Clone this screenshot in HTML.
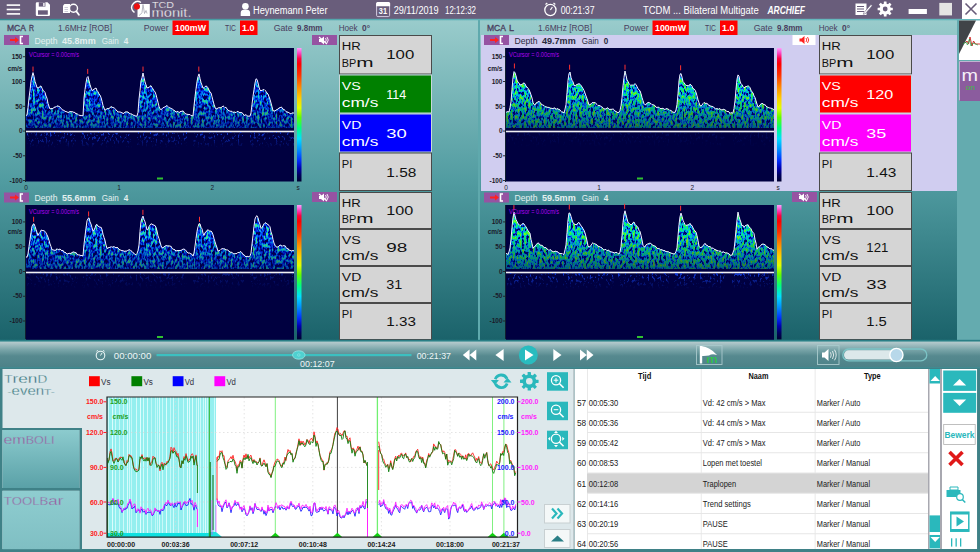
<!DOCTYPE html>
<html><head><meta charset="utf-8"><title>TCD monit</title>
<style>html,body{margin:0;padding:0;width:980px;height:552px;overflow:hidden;background:#5fa7ab;font-family:"Liberation Sans",sans-serif}svg{display:block}</style>
</head><body><svg width="980" height="552" viewBox="0 0 980 552" font-family="Liberation Sans, sans-serif"><defs><linearGradient id="gPanel" x1="0" y1="0" x2="0" y2="1">
<stop offset="0" stop-color="#9acccc"/><stop offset="0.5" stop-color="#519ca1"/><stop offset="1" stop-color="#1a626a"/></linearGradient>
<linearGradient id="gTopLine" x1="0" y1="0" x2="1" y2="0"><stop offset="0" stop-color="#358b93"/><stop offset="0.6" stop-color="#6abcc1"/><stop offset="1" stop-color="#62b6bb"/></linearGradient>
<linearGradient id="gPlay" x1="0" y1="0" x2="0" y2="1">
<stop offset="0" stop-color="#b8cccf"/><stop offset="0.3" stop-color="#7ba6aa"/><stop offset="0.55" stop-color="#56898f"/><stop offset="1" stop-color="#4c8288"/></linearGradient>
<linearGradient id="gEmb" x1="0" y1="0" x2="0" y2="1">
<stop offset="0" stop-color="#8ccbce"/><stop offset="1" stop-color="#5aa1a7"/></linearGradient>
<linearGradient id="gTool" x1="0" y1="0" x2="0" y2="1">
<stop offset="0" stop-color="#8fcdd0"/><stop offset="1" stop-color="#7fbfc3"/></linearGradient>
<linearGradient id="gBar" x1="0" y1="0" x2="0" y2="1">
<stop offset="0" stop-color="#ffa0ff"/><stop offset="0.04" stop-color="#ff40c0"/><stop offset="0.08" stop-color="#ff0040"/><stop offset="0.12" stop-color="#ff0000"/>
<stop offset="0.2" stop-color="#ff3000"/><stop offset="0.3" stop-color="#ff9000"/><stop offset="0.38" stop-color="#ffd000"/><stop offset="0.45" stop-color="#e0ff00"/>
<stop offset="0.52" stop-color="#60ff00"/><stop offset="0.6" stop-color="#00ff80"/><stop offset="0.68" stop-color="#00e0ff"/><stop offset="0.76" stop-color="#0090ff"/>
<stop offset="0.84" stop-color="#0030ff"/><stop offset="0.9" stop-color="#0000b0"/><stop offset="0.95" stop-color="#000060"/><stop offset="1" stop-color="#000030"/></linearGradient>
<filter id="spk" x="0" y="0" width="1" height="1" filterUnits="objectBoundingBox" color-interpolation-filters="sRGB">
<feTurbulence type="fractalNoise" baseFrequency="0.45 0.25" numOctaves="2" seed="4" result="n"/>
<feColorMatrix in="n" type="matrix" values="1 0 0 0 0  1 0 0 0 0  1 0 0 0 0  0 0 0 0 1" result="g"/>
<feComponentTransfer in="g" result="s"><feFuncR type="linear" slope="2.5" intercept="-0.85"/><feFuncG type="linear" slope="2.5" intercept="-0.85"/><feFuncB type="linear" slope="2.5" intercept="-0.85"/></feComponentTransfer>
<feComponentTransfer in="s"><feFuncR type="table" tableValues="0 0 0 0 0 0.1 0.3"/><feFuncG type="table" tableValues="0 0.02 0.15 0.42 0.72 0.9 1"/><feFuncB type="table" tableValues="0.3 0.65 0.95 1 1 0.8 0.5"/></feComponentTransfer>
</filter>
<filter id="spk2" x="0" y="0" width="1" height="1" filterUnits="objectBoundingBox" color-interpolation-filters="sRGB">
<feTurbulence type="fractalNoise" baseFrequency="0.45 0.25" numOctaves="2" seed="9" result="n"/>
<feColorMatrix in="n" type="matrix" values="1 0 0 0 0  1 0 0 0 0  1 0 0 0 0  0 0 0 0 1" result="g"/>
<feComponentTransfer in="g" result="s"><feFuncR type="linear" slope="2.5" intercept="-0.8"/><feFuncG type="linear" slope="2.5" intercept="-0.8"/><feFuncB type="linear" slope="2.5" intercept="-0.8"/></feComponentTransfer>
<feComponentTransfer in="s"><feFuncR type="table" tableValues="0 0 0 0 0 0.15 0.5"/><feFuncG type="table" tableValues="0.03 0.22 0.55 0.85 1 1 1"/><feFuncB type="table" tableValues="0.4 0.9 1 0.85 0.5 0.25 0.1"/></feComponentTransfer>
</filter>
<filter id="sprs" x="0" y="0" width="1" height="1" filterUnits="objectBoundingBox" color-interpolation-filters="sRGB">
<feTurbulence type="fractalNoise" baseFrequency="0.5 0.3" numOctaves="2" seed="5" result="n"/>
<feColorMatrix in="n" type="matrix" values="0 0 0 0 0.1  0 0 0 0 0.3  0 0 0 0 1  7 0 0 0 -3.9"/>
</filter>
<linearGradient id="gFade" x1="0" y1="0" x2="0" y2="1"><stop offset="0" stop-color="#fff" stop-opacity="1"/><stop offset="1" stop-color="#fff" stop-opacity="0"/></linearGradient>
<linearGradient id="gDark" x1="0" y1="0" x2="0" y2="1"><stop offset="0" stop-color="#000040" stop-opacity="0"/><stop offset="0.55" stop-color="#000040" stop-opacity="0.1"/><stop offset="1" stop-color="#000040" stop-opacity="0.55"/></linearGradient>
<linearGradient id="gDark2" x1="0" y1="0" x2="0" y2="1"><stop offset="0" stop-color="#000040" stop-opacity="0"/><stop offset="0.5" stop-color="#000040" stop-opacity="0.05"/><stop offset="1" stop-color="#000040" stop-opacity="0.6"/></linearGradient>
<clipPath id="cp1"><path d="M26,128 L26.0,115.4 L27.0,115.1 L28.0,107.5 L29.0,98.1 L30.0,90.2 L31.0,81.3 L32.0,76.3 L33.0,72.6 L34.0,76.3 L35.0,81.4 L36.0,84.2 L37.0,87.7 L38.0,87.8 L39.0,87.9 L40.0,86.3 L41.0,86.0 L42.0,88.2 L43.0,90.2 L44.0,91.2 L45.0,92.4 L46.0,96.0 L47.0,98.3 L48.0,103.4 L49.0,106.3 L50.0,109.0 L51.0,108.5 L52.0,108.4 L53.0,108.7 L54.0,107.2 L55.0,107.2 L56.0,106.8 L57.0,105.8 L58.0,106.2 L59.0,106.3 L60.0,107.1 L61.0,108.1 L62.0,109.7 L63.0,110.1 L64.0,110.4 L65.0,111.3 L66.0,111.6 L67.0,111.9 L68.0,112.5 L69.0,112.2 L70.0,111.4 L71.0,111.8 L72.0,111.6 L73.0,112.0 L74.0,112.4 L75.0,112.4 L76.0,114.1 L77.0,113.4 L78.0,114.5 L79.0,115.5 L80.0,115.0 L81.0,115.9 L82.0,115.4 L83.0,115.9 L84.0,98.0 L85.0,89.4 L86.0,82.8 L87.0,77.6 L88.0,76.5 L89.0,80.6 L90.0,84.6 L91.0,87.7 L92.0,90.5 L93.0,90.2 L94.0,89.0 L95.0,88.8 L96.0,87.9 L97.0,90.5 L98.0,91.8 L99.0,93.9 L100.0,95.1 L101.0,97.4 L102.0,101.2 L103.0,105.4 L104.0,108.0 L105.0,110.3 L106.0,109.4 L107.0,108.8 L108.0,108.3 L109.0,108.9 L110.0,107.3 L111.0,107.0 L112.0,106.7 L113.0,108.0 L114.0,107.5 L115.0,108.8 L116.0,109.8 L117.0,111.1 L118.0,111.7 L119.0,112.2 L120.0,111.8 L121.0,112.5 L122.0,112.7 L123.0,113.4 L124.0,113.4 L125.0,112.0 L126.0,111.9 L127.0,111.9 L128.0,112.0 L129.0,113.0 L130.0,113.8 L131.0,113.9 L132.0,114.1 L133.0,115.2 L134.0,115.2 L135.0,115.6 L136.0,116.3 L137.0,116.0 L138.0,112.3 L139.0,99.0 L140.0,90.4 L141.0,80.8 L142.0,77.7 L143.0,73.0 L144.0,77.6 L145.0,81.9 L146.0,84.8 L147.0,88.2 L148.0,87.3 L149.0,87.6 L150.0,86.2 L151.0,85.7 L152.0,87.5 L153.0,89.0 L154.0,90.8 L155.0,91.9 L156.0,94.5 L157.0,98.5 L158.0,102.2 L159.0,106.4 L160.0,108.9 L161.0,109.7 L162.0,108.9 L163.0,107.7 L164.0,107.3 L165.0,106.9 L166.0,106.3 L167.0,105.4 L168.0,106.7 L169.0,107.7 L170.0,107.7 L171.0,108.6 L172.0,108.7 L173.0,109.6 L174.0,110.4 L175.0,110.8 L176.0,112.2 L177.0,111.6 L178.0,111.3 L179.0,112.7 L180.0,111.9 L181.0,111.1 L182.0,111.6 L183.0,110.7 L184.0,112.1 L185.0,113.5 L186.0,113.9 L187.0,114.3 L188.0,114.3 L189.0,114.6 L190.0,114.5 L191.0,115.7 L192.0,115.5 L193.0,116.1 L194.0,106.0 L195.0,96.6 L196.0,88.9 L197.0,81.4 L198.0,76.7 L199.0,73.9 L200.0,78.4 L201.0,82.5 L202.0,85.2 L203.0,88.3 L204.0,87.6 L205.0,86.6 L206.0,86.1 L207.0,86.4 L208.0,87.9 L209.0,90.1 L210.0,92.1 L211.0,92.8 L212.0,96.7 L213.0,100.6 L214.0,104.3 L215.0,107.2 L216.0,109.1 L217.0,108.6 L218.0,108.1 L219.0,107.6 L220.0,107.8 L221.0,107.6 L222.0,107.0 L223.0,105.9 L224.0,106.6 L225.0,107.6 L226.0,107.3 L227.0,109.0 L228.0,110.2 L229.0,110.7 L230.0,111.2 L231.0,111.3 L232.0,111.3 L233.0,112.6 L234.0,111.8 L235.0,112.4 L236.0,112.5 L237.0,111.5 L238.0,111.4 L239.0,112.3 L240.0,112.6 L241.0,112.3 L242.0,112.9 L243.0,113.6 L244.0,115.3 L245.0,115.4 L246.0,114.5 L247.0,115.8 L248.0,116.3 L249.0,116.0 L250.0,116.2 L251.0,112.9 L252.0,104.4 L253.0,96.3 L254.0,89.7 L255.0,83.1 L256.0,78.8 L257.0,79.4 L258.0,82.8 L259.0,87.1 L260.0,90.3 L261.0,90.7 L262.0,90.3 L263.0,89.9 L264.0,89.4 L265.0,90.4 L266.0,91.3 L267.0,93.0 L268.0,94.0 L269.0,96.6 L270.0,99.3 L271.0,103.0 L272.0,106.7 L273.0,110.8 L274.0,110.8 L275.0,111.1 L276.0,110.0 L277.0,109.6 L278.0,109.1 L279.0,107.8 L280.0,107.9 L281.0,107.0 L282.0,107.5 L283.0,109.5 L284.0,109.2 L285.0,110.5 L286.0,111.6 L287.0,112.0 L288.0,112.1 L289.0,112.8 L290.0,113.4 L291.0,113.9 L292.0,112.7 L293.0,113.3 L294.0,112.7 L294,128 Z"/></clipPath>
<mask id="mk1" maskUnits="userSpaceOnUse" x="26" y="131" width="268" height="30"><rect x="26" y="132" width="268" height="16" fill="url(#gFade)"/></mask>
<clipPath id="cp2"><path d="M26,269.0 L26.0,256.6 L27.0,257.4 L28.0,253.9 L29.0,246.4 L30.0,239.4 L31.0,232.4 L32.0,226.3 L33.0,224.3 L34.0,223.8 L35.0,226.3 L36.0,229.5 L37.0,232.4 L38.0,235.4 L39.0,233.5 L40.0,232.4 L41.0,230.2 L42.0,230.2 L43.0,230.9 L44.0,230.4 L45.0,231.6 L46.0,232.8 L47.0,234.9 L48.0,237.1 L49.0,240.3 L50.0,243.9 L51.0,246.5 L52.0,249.9 L53.0,249.7 L54.0,250.3 L55.0,250.2 L56.0,250.2 L57.0,248.7 L58.0,249.7 L59.0,249.7 L60.0,248.9 L61.0,250.2 L62.0,250.7 L63.0,250.3 L64.0,252.3 L65.0,252.2 L66.0,252.9 L67.0,254.0 L68.0,253.9 L69.0,253.1 L70.0,253.5 L71.0,253.3 L72.0,252.6 L73.0,252.0 L74.0,251.9 L75.0,252.7 L76.0,252.5 L77.0,254.2 L78.0,255.0 L79.0,254.8 L80.0,255.2 L81.0,255.6 L82.0,255.4 L83.0,255.9 L84.0,244.3 L85.0,235.9 L86.0,228.1 L87.0,220.8 L88.0,218.6 L89.0,217.8 L90.0,221.8 L91.0,224.1 L92.0,227.6 L93.0,231.3 L94.0,230.0 L95.0,227.9 L96.0,224.9 L97.0,224.4 L98.0,226.3 L99.0,226.5 L100.0,227.4 L101.0,227.1 L102.0,229.5 L103.0,234.2 L104.0,237.4 L105.0,240.3 L106.0,245.1 L107.0,248.1 L108.0,248.5 L109.0,247.0 L110.0,247.9 L111.0,246.4 L112.0,247.4 L113.0,246.8 L114.0,246.7 L115.0,247.2 L116.0,247.9 L117.0,247.2 L118.0,247.9 L119.0,249.4 L120.0,249.8 L121.0,250.3 L122.0,250.6 L123.0,250.7 L124.0,251.2 L125.0,251.3 L126.0,250.9 L127.0,251.2 L128.0,250.1 L129.0,250.0 L130.0,249.7 L131.0,250.9 L132.0,251.4 L133.0,252.8 L134.0,253.2 L135.0,254.6 L136.0,254.6 L137.0,253.5 L138.0,250.6 L139.0,245.0 L140.0,231.4 L141.0,221.3 L142.0,218.1 L143.0,216.1 L144.0,219.5 L145.0,221.8 L146.0,225.8 L147.0,229.9 L148.0,229.5 L149.0,226.4 L150.0,225.1 L151.0,223.7 L152.0,224.3 L153.0,224.6 L154.0,225.3 L155.0,225.5 L156.0,227.3 L157.0,231.0 L158.0,235.8 L159.0,238.6 L160.0,242.0 L161.0,245.5 L162.0,247.9 L163.0,247.7 L164.0,247.0 L165.0,246.1 L166.0,245.7 L167.0,245.7 L168.0,246.1 L169.0,245.7 L170.0,246.3 L171.0,246.2 L172.0,248.3 L173.0,249.2 L174.0,249.4 L175.0,249.8 L176.0,251.2 L177.0,250.4 L178.0,250.7 L179.0,250.4 L180.0,250.6 L181.0,250.3 L182.0,249.9 L183.0,249.0 L184.0,249.2 L185.0,249.5 L186.0,250.9 L187.0,251.7 L188.0,253.2 L189.0,252.9 L190.0,253.2 L191.0,254.0 L192.0,254.3 L193.0,256.1 L194.0,253.1 L195.0,246.0 L196.0,238.5 L197.0,231.3 L198.0,226.8 L199.0,223.7 L200.0,223.8 L201.0,227.3 L202.0,228.9 L203.0,233.2 L204.0,235.4 L205.0,232.6 L206.0,232.1 L207.0,230.3 L208.0,229.8 L209.0,230.6 L210.0,231.4 L211.0,230.9 L212.0,232.2 L213.0,234.7 L214.0,238.5 L215.0,241.7 L216.0,244.9 L217.0,247.6 L218.0,251.2 L219.0,250.6 L220.0,250.3 L221.0,249.3 L222.0,248.7 L223.0,248.6 L224.0,249.1 L225.0,248.8 L226.0,250.1 L227.0,249.7 L228.0,250.3 L229.0,251.1 L230.0,252.0 L231.0,252.4 L232.0,252.2 L233.0,253.7 L234.0,253.8 L235.0,253.7 L236.0,253.6 L237.0,253.5 L238.0,252.2 L239.0,252.9 L240.0,251.7 L241.0,251.7 L242.0,252.9 L243.0,254.6 L244.0,254.7 L245.0,256.1 L246.0,256.8 L247.0,256.3 L248.0,256.5 L249.0,256.9 L250.0,255.9 L251.0,253.1 L252.0,244.0 L253.0,235.6 L254.0,226.2 L255.0,219.0 L256.0,216.5 L257.0,215.7 L258.0,217.9 L259.0,221.5 L260.0,224.5 L261.0,228.5 L262.0,227.3 L263.0,225.8 L264.0,223.8 L265.0,222.8 L266.0,222.9 L267.0,224.0 L268.0,224.6 L269.0,225.4 L270.0,226.8 L271.0,231.9 L272.0,234.6 L273.0,239.5 L274.0,243.1 L275.0,245.2 L276.0,246.8 L277.0,247.1 L278.0,247.0 L279.0,245.8 L280.0,245.2 L281.0,245.1 L282.0,246.4 L283.0,245.4 L284.0,246.1 L285.0,245.6 L286.0,247.2 L287.0,248.8 L288.0,248.4 L289.0,250.3 L290.0,250.1 L291.0,250.9 L292.0,250.9 L293.0,250.3 L294.0,250.9 L294,269.0 Z"/></clipPath>
<mask id="mk2" maskUnits="userSpaceOnUse" x="26" y="272.0" width="268" height="30"><rect x="26" y="273.0" width="268" height="16" fill="url(#gFade)"/></mask>
<clipPath id="cp3"><path d="M506,128 L506.0,112.5 L507.0,111.7 L508.0,111.7 L509.0,112.0 L510.0,107.5 L511.0,101.9 L512.0,89.2 L513.0,77.6 L514.0,71.6 L515.0,72.7 L516.0,75.9 L517.0,80.1 L518.0,82.2 L519.0,83.1 L520.0,85.1 L521.0,84.6 L522.0,84.7 L523.0,83.3 L524.0,83.0 L525.0,83.7 L526.0,86.2 L527.0,87.0 L528.0,88.2 L529.0,89.8 L530.0,92.0 L531.0,94.8 L532.0,98.0 L533.0,102.4 L534.0,104.6 L535.0,104.9 L536.0,103.1 L537.0,102.4 L538.0,102.0 L539.0,101.2 L540.0,102.3 L541.0,103.9 L542.0,104.6 L543.0,105.2 L544.0,105.5 L545.0,106.5 L546.0,107.0 L547.0,106.9 L548.0,107.7 L549.0,107.1 L550.0,108.3 L551.0,108.0 L552.0,108.6 L553.0,108.5 L554.0,108.1 L555.0,107.9 L556.0,109.5 L557.0,108.4 L558.0,109.1 L559.0,109.4 L560.0,109.9 L561.0,111.3 L562.0,112.3 L563.0,111.8 L564.0,113.0 L565.0,109.2 L566.0,104.6 L567.0,92.8 L568.0,80.2 L569.0,73.7 L570.0,72.0 L571.0,77.5 L572.0,80.3 L573.0,81.8 L574.0,84.9 L575.0,86.1 L576.0,85.1 L577.0,84.4 L578.0,84.2 L579.0,83.6 L580.0,84.3 L581.0,85.3 L582.0,87.0 L583.0,88.5 L584.0,90.5 L585.0,93.1 L586.0,96.0 L587.0,98.6 L588.0,101.7 L589.0,104.9 L590.0,104.7 L591.0,103.9 L592.0,102.8 L593.0,102.4 L594.0,102.9 L595.0,102.3 L596.0,103.6 L597.0,104.5 L598.0,105.6 L599.0,105.3 L600.0,105.8 L601.0,106.3 L602.0,107.1 L603.0,107.7 L604.0,108.9 L605.0,108.9 L606.0,109.1 L607.0,107.8 L608.0,108.0 L609.0,109.2 L610.0,109.6 L611.0,109.1 L612.0,109.5 L613.0,108.8 L614.0,109.7 L615.0,111.1 L616.0,111.5 L617.0,112.1 L618.0,112.8 L619.0,112.2 L620.0,110.4 L621.0,105.8 L622.0,97.9 L623.0,85.9 L624.0,77.3 L625.0,71.0 L626.0,75.3 L627.0,79.9 L628.0,81.4 L629.0,83.5 L630.0,84.7 L631.0,85.7 L632.0,84.6 L633.0,85.6 L634.0,84.6 L635.0,83.6 L636.0,84.8 L637.0,86.5 L638.0,88.6 L639.0,90.1 L640.0,90.7 L641.0,93.7 L642.0,97.5 L643.0,100.7 L644.0,103.5 L645.0,104.8 L646.0,104.6 L647.0,103.0 L648.0,102.7 L649.0,102.2 L650.0,103.3 L651.0,103.5 L652.0,104.7 L653.0,104.7 L654.0,105.1 L655.0,105.6 L656.0,107.3 L657.0,107.4 L658.0,107.2 L659.0,107.3 L660.0,108.3 L661.0,108.7 L662.0,108.4 L663.0,108.3 L664.0,109.1 L665.0,109.6 L666.0,108.7 L667.0,108.6 L668.0,109.2 L669.0,109.5 L670.0,110.5 L671.0,110.2 L672.0,111.7 L673.0,112.2 L674.0,112.3 L675.0,112.4 L676.0,109.9 L677.0,104.4 L678.0,93.9 L679.0,80.8 L680.0,74.3 L681.0,73.5 L682.0,77.1 L683.0,81.5 L684.0,82.7 L685.0,84.2 L686.0,85.4 L687.0,85.5 L688.0,85.7 L689.0,85.9 L690.0,84.1 L691.0,84.8 L692.0,86.0 L693.0,88.7 L694.0,88.8 L695.0,90.1 L696.0,92.2 L697.0,95.8 L698.0,99.7 L699.0,102.7 L700.0,105.5 L701.0,106.0 L702.0,105.1 L703.0,103.5 L704.0,102.5 L705.0,103.1 L706.0,103.6 L707.0,103.1 L708.0,104.9 L709.0,105.1 L710.0,105.8 L711.0,106.2 L712.0,106.4 L713.0,106.7 L714.0,107.6 L715.0,108.2 L716.0,109.3 L717.0,108.1 L718.0,109.6 L719.0,108.5 L720.0,108.9 L721.0,109.7 L722.0,109.9 L723.0,109.5 L724.0,109.1 L725.0,110.1 L726.0,110.4 L727.0,111.8 L728.0,111.2 L729.0,112.0 L730.0,113.4 L731.0,112.4 L732.0,113.3 L733.0,112.8 L734.0,108.5 L735.0,100.9 L736.0,89.1 L737.0,79.2 L738.0,74.9 L739.0,76.1 L740.0,81.1 L741.0,83.7 L742.0,84.7 L743.0,86.5 L744.0,87.8 L745.0,87.1 L746.0,86.4 L747.0,86.7 L748.0,85.6 L749.0,86.6 L750.0,87.6 L751.0,90.2 L752.0,91.9 L753.0,92.8 L754.0,96.0 L755.0,97.5 L756.0,100.8 L757.0,104.1 L758.0,107.1 L759.0,106.4 L760.0,104.8 L761.0,103.9 L762.0,103.5 L763.0,103.6 L764.0,105.0 L765.0,104.5 L766.0,106.2 L767.0,106.8 L768.0,107.4 L769.0,107.8 L770.0,108.1 L771.0,108.1 L772.0,108.6 L773.0,109.0 L774.0,109.8 L774,128 Z"/></clipPath>
<mask id="mk3" maskUnits="userSpaceOnUse" x="506" y="131" width="268" height="30"><rect x="506" y="132" width="268" height="16" fill="url(#gFade)"/></mask>
<clipPath id="cp4"><path d="M506,269.0 L506.0,253.5 L507.0,253.7 L508.0,254.6 L509.0,251.7 L510.0,247.9 L511.0,239.1 L512.0,227.5 L513.0,217.6 L514.0,212.2 L515.0,215.8 L516.0,219.6 L517.0,221.4 L518.0,223.8 L519.0,224.4 L520.0,225.4 L521.0,225.2 L522.0,224.2 L523.0,223.3 L524.0,224.0 L525.0,225.6 L526.0,226.9 L527.0,228.7 L528.0,230.6 L529.0,232.1 L530.0,233.3 L531.0,239.4 L532.0,243.4 L533.0,248.2 L534.0,246.9 L535.0,246.5 L536.0,244.7 L537.0,243.8 L538.0,242.9 L539.0,243.4 L540.0,245.1 L541.0,245.2 L542.0,245.4 L543.0,246.1 L544.0,247.7 L545.0,247.5 L546.0,247.6 L547.0,249.1 L548.0,249.4 L549.0,250.5 L550.0,249.4 L551.0,250.3 L552.0,251.2 L553.0,251.5 L554.0,252.0 L555.0,250.9 L556.0,251.6 L557.0,251.6 L558.0,252.0 L559.0,253.5 L560.0,253.1 L561.0,253.9 L562.0,253.3 L563.0,254.4 L564.0,254.2 L565.0,249.8 L566.0,244.9 L567.0,232.7 L568.0,219.8 L569.0,212.9 L570.0,213.3 L571.0,216.4 L572.0,219.9 L573.0,222.5 L574.0,223.9 L575.0,224.4 L576.0,224.7 L577.0,224.2 L578.0,223.0 L579.0,222.4 L580.0,224.1 L581.0,225.9 L582.0,226.7 L583.0,228.7 L584.0,230.2 L585.0,232.9 L586.0,236.6 L587.0,240.8 L588.0,245.8 L589.0,247.1 L590.0,246.4 L591.0,245.5 L592.0,243.6 L593.0,242.7 L594.0,243.7 L595.0,243.9 L596.0,244.3 L597.0,244.9 L598.0,246.5 L599.0,246.1 L600.0,247.1 L601.0,247.3 L602.0,248.0 L603.0,249.3 L604.0,250.1 L605.0,249.5 L606.0,249.5 L607.0,250.7 L608.0,250.2 L609.0,250.2 L610.0,251.9 L611.0,251.5 L612.0,252.4 L613.0,252.0 L614.0,253.1 L615.0,252.7 L616.0,252.4 L617.0,252.5 L618.0,253.6 L619.0,254.0 L620.0,252.1 L621.0,246.5 L622.0,235.6 L623.0,222.5 L624.0,214.5 L625.0,210.8 L626.0,214.8 L627.0,218.7 L628.0,222.4 L629.0,223.1 L630.0,224.2 L631.0,224.8 L632.0,224.4 L633.0,222.6 L634.0,222.0 L635.0,224.3 L636.0,225.6 L637.0,226.2 L638.0,227.3 L639.0,230.4 L640.0,231.4 L641.0,235.3 L642.0,239.9 L643.0,245.2 L644.0,246.8 L645.0,246.8 L646.0,244.9 L647.0,244.2 L648.0,243.9 L649.0,243.5 L650.0,243.0 L651.0,243.7 L652.0,244.6 L653.0,245.4 L654.0,245.8 L655.0,246.0 L656.0,246.7 L657.0,248.1 L658.0,249.0 L659.0,248.2 L660.0,249.5 L661.0,250.1 L662.0,249.3 L663.0,250.9 L664.0,250.0 L665.0,251.1 L666.0,251.4 L667.0,251.8 L668.0,251.6 L669.0,252.2 L670.0,252.8 L671.0,252.9 L672.0,253.6 L673.0,253.7 L674.0,254.0 L675.0,253.6 L676.0,251.4 L677.0,247.8 L678.0,236.0 L679.0,224.6 L680.0,216.6 L681.0,213.1 L682.0,216.3 L683.0,220.2 L684.0,222.5 L685.0,224.5 L686.0,225.5 L687.0,225.0 L688.0,225.0 L689.0,224.6 L690.0,223.3 L691.0,225.2 L692.0,225.5 L693.0,227.9 L694.0,229.7 L695.0,231.0 L696.0,232.0 L697.0,235.7 L698.0,240.4 L699.0,246.2 L700.0,247.5 L701.0,247.7 L702.0,246.9 L703.0,245.5 L704.0,244.7 L705.0,243.3 L706.0,245.2 L707.0,245.0 L708.0,246.3 L709.0,246.8 L710.0,246.2 L711.0,247.8 L712.0,248.6 L713.0,247.8 L714.0,248.8 L715.0,250.0 L716.0,249.5 L717.0,251.0 L718.0,250.3 L719.0,251.5 L720.0,250.7 L721.0,251.6 L722.0,252.6 L723.0,251.7 L724.0,252.1 L725.0,252.9 L726.0,252.9 L727.0,252.8 L728.0,253.4 L729.0,253.7 L730.0,255.3 L731.0,255.1 L732.0,255.2 L733.0,252.3 L734.0,249.9 L735.0,241.0 L736.0,229.6 L737.0,220.0 L738.0,212.1 L739.0,216.5 L740.0,219.7 L741.0,222.6 L742.0,226.0 L743.0,225.3 L744.0,227.2 L745.0,226.0 L746.0,225.1 L747.0,225.2 L748.0,224.6 L749.0,227.0 L750.0,227.5 L751.0,228.8 L752.0,231.2 L753.0,232.3 L754.0,233.6 L755.0,239.4 L756.0,243.1 L757.0,249.2 L758.0,247.3 L759.0,247.0 L760.0,246.6 L761.0,245.0 L762.0,244.1 L763.0,244.1 L764.0,244.2 L765.0,244.8 L766.0,245.6 L767.0,246.9 L768.0,247.2 L769.0,247.9 L770.0,249.1 L771.0,248.4 L772.0,249.2 L773.0,250.4 L774.0,249.7 L774,269.0 Z"/></clipPath>
<mask id="mk4" maskUnits="userSpaceOnUse" x="506" y="272.0" width="268" height="30"><rect x="506" y="273.0" width="268" height="16" fill="url(#gFade)"/></mask></defs>
<rect x="0" y="0" width="980" height="552" fill="#5fa7ab"/>
<rect x="0" y="19" width="957" height="322" fill="url(#gPanel)"/>
<rect x="478" y="19" width="2" height="322" fill="#5fa9ad"/>
<rect x="481" y="35" width="476" height="156" fill="#d0cdf0"/>
<rect x="957" y="19" width="23" height="322" fill="#64abaf"/>
<rect x="0" y="0" width="980" height="19" fill="#695d7b"/>
<rect x="0" y="18.8" width="980" height="1.5" fill="url(#gTopLine)"/>
<g>
<rect x="26" y="48" width="268" height="133.5" fill="#000040"/>
<rect x="26" y="48" width="268" height="133.5" filter="url(#spk)" clip-path="url(#cp1)"/>
<rect x="26" y="56" width="268" height="75" fill="url(#gDark)" clip-path="url(#cp1)"/>
<path d="M26.0,115.4 L27.0,115.1 L28.0,107.5 L29.0,98.1 L30.0,90.2 L31.0,81.3 L32.0,76.3 L33.0,72.6 L34.0,76.3 L35.0,81.4 L36.0,84.2 L37.0,87.7 L38.0,87.8 L39.0,87.9 L40.0,86.3 L41.0,86.0 L42.0,88.2 L43.0,90.2 L44.0,91.2 L45.0,92.4 L46.0,96.0 L47.0,98.3 L48.0,103.4 L49.0,106.3 L50.0,109.0 L51.0,108.5 L52.0,108.4 L53.0,108.7 L54.0,107.2 L55.0,107.2 L56.0,106.8 L57.0,105.8 L58.0,106.2 L59.0,106.3 L60.0,107.1 L61.0,108.1 L62.0,109.7 L63.0,110.1 L64.0,110.4 L65.0,111.3 L66.0,111.6 L67.0,111.9 L68.0,112.5 L69.0,112.2 L70.0,111.4 L71.0,111.8 L72.0,111.6 L73.0,112.0 L74.0,112.4 L75.0,112.4 L76.0,114.1 L77.0,113.4 L78.0,114.5 L79.0,115.5 L80.0,115.0 L81.0,115.9 L82.0,115.4 L83.0,115.9 L84.0,98.0 L85.0,89.4 L86.0,82.8 L87.0,77.6 L88.0,76.5 L89.0,80.6 L90.0,84.6 L91.0,87.7 L92.0,90.5 L93.0,90.2 L94.0,89.0 L95.0,88.8 L96.0,87.9 L97.0,90.5 L98.0,91.8 L99.0,93.9 L100.0,95.1 L101.0,97.4 L102.0,101.2 L103.0,105.4 L104.0,108.0 L105.0,110.3 L106.0,109.4 L107.0,108.8 L108.0,108.3 L109.0,108.9 L110.0,107.3 L111.0,107.0 L112.0,106.7 L113.0,108.0 L114.0,107.5 L115.0,108.8 L116.0,109.8 L117.0,111.1 L118.0,111.7 L119.0,112.2 L120.0,111.8 L121.0,112.5 L122.0,112.7 L123.0,113.4 L124.0,113.4 L125.0,112.0 L126.0,111.9 L127.0,111.9 L128.0,112.0 L129.0,113.0 L130.0,113.8 L131.0,113.9 L132.0,114.1 L133.0,115.2 L134.0,115.2 L135.0,115.6 L136.0,116.3 L137.0,116.0 L138.0,112.3 L139.0,99.0 L140.0,90.4 L141.0,80.8 L142.0,77.7 L143.0,73.0 L144.0,77.6 L145.0,81.9 L146.0,84.8 L147.0,88.2 L148.0,87.3 L149.0,87.6 L150.0,86.2 L151.0,85.7 L152.0,87.5 L153.0,89.0 L154.0,90.8 L155.0,91.9 L156.0,94.5 L157.0,98.5 L158.0,102.2 L159.0,106.4 L160.0,108.9 L161.0,109.7 L162.0,108.9 L163.0,107.7 L164.0,107.3 L165.0,106.9 L166.0,106.3 L167.0,105.4 L168.0,106.7 L169.0,107.7 L170.0,107.7 L171.0,108.6 L172.0,108.7 L173.0,109.6 L174.0,110.4 L175.0,110.8 L176.0,112.2 L177.0,111.6 L178.0,111.3 L179.0,112.7 L180.0,111.9 L181.0,111.1 L182.0,111.6 L183.0,110.7 L184.0,112.1 L185.0,113.5 L186.0,113.9 L187.0,114.3 L188.0,114.3 L189.0,114.6 L190.0,114.5 L191.0,115.7 L192.0,115.5 L193.0,116.1 L194.0,106.0 L195.0,96.6 L196.0,88.9 L197.0,81.4 L198.0,76.7 L199.0,73.9 L200.0,78.4 L201.0,82.5 L202.0,85.2 L203.0,88.3 L204.0,87.6 L205.0,86.6 L206.0,86.1 L207.0,86.4 L208.0,87.9 L209.0,90.1 L210.0,92.1 L211.0,92.8 L212.0,96.7 L213.0,100.6 L214.0,104.3 L215.0,107.2 L216.0,109.1 L217.0,108.6 L218.0,108.1 L219.0,107.6 L220.0,107.8 L221.0,107.6 L222.0,107.0 L223.0,105.9 L224.0,106.6 L225.0,107.6 L226.0,107.3 L227.0,109.0 L228.0,110.2 L229.0,110.7 L230.0,111.2 L231.0,111.3 L232.0,111.3 L233.0,112.6 L234.0,111.8 L235.0,112.4 L236.0,112.5 L237.0,111.5 L238.0,111.4 L239.0,112.3 L240.0,112.6 L241.0,112.3 L242.0,112.9 L243.0,113.6 L244.0,115.3 L245.0,115.4 L246.0,114.5 L247.0,115.8 L248.0,116.3 L249.0,116.0 L250.0,116.2 L251.0,112.9 L252.0,104.4 L253.0,96.3 L254.0,89.7 L255.0,83.1 L256.0,78.8 L257.0,79.4 L258.0,82.8 L259.0,87.1 L260.0,90.3 L261.0,90.7 L262.0,90.3 L263.0,89.9 L264.0,89.4 L265.0,90.4 L266.0,91.3 L267.0,93.0 L268.0,94.0 L269.0,96.6 L270.0,99.3 L271.0,103.0 L272.0,106.7 L273.0,110.8 L274.0,110.8 L275.0,111.1 L276.0,110.0 L277.0,109.6 L278.0,109.1 L279.0,107.8 L280.0,107.9 L281.0,107.0 L282.0,107.5 L283.0,109.5 L284.0,109.2 L285.0,110.5 L286.0,111.6 L287.0,112.0 L288.0,112.1 L289.0,112.8 L290.0,113.4 L291.0,113.9 L292.0,112.7 L293.0,113.3 L294.0,112.7" fill="none" stroke="#f0f0ff" stroke-width="1"/>
<rect x="26" y="130.7" width="268" height="1.6" fill="#f0f0f4"/>
<g mask="url(#mk1)" opacity="0.8">
<rect x="27" y="132" width="50" height="22" filter="url(#sprs)"/>
<rect x="81.7" y="132" width="49.999999999999986" height="22" filter="url(#sprs)"/>
<rect x="137" y="132" width="50" height="22" filter="url(#sprs)"/>
<rect x="192.8" y="132" width="50.0" height="22" filter="url(#sprs)"/>
<rect x="250.5" y="132" width="43.5" height="22" filter="url(#sprs)"/>
</g>
<rect x="32.5" y="66.5546" width="1" height="5" fill="#ff3030"/>
<rect x="87.2" y="68.892416" width="1" height="5" fill="#ff3030"/>
<rect x="142.5" y="66.5546" width="1" height="5" fill="#ff3030"/>
<rect x="198.3" y="66.5546" width="1" height="5" fill="#ff3030"/>
<text x="29" y="57" font-size="6.5" fill="#b000f0" textLength="50" lengthAdjust="spacingAndGlyphs">VCursor = 0.00cm/s</text>
<rect x="157" y="177.5" width="6" height="2" fill="#30c030"/>
</g>
<g>
<rect x="26" y="205" width="268" height="135" fill="#000040"/>
<rect x="26" y="205" width="268" height="135" filter="url(#spk)" clip-path="url(#cp2)"/>
<rect x="26" y="197.0" width="268" height="75" fill="url(#gDark)" clip-path="url(#cp2)"/>
<path d="M26.0,256.6 L27.0,257.4 L28.0,253.9 L29.0,246.4 L30.0,239.4 L31.0,232.4 L32.0,226.3 L33.0,224.3 L34.0,223.8 L35.0,226.3 L36.0,229.5 L37.0,232.4 L38.0,235.4 L39.0,233.5 L40.0,232.4 L41.0,230.2 L42.0,230.2 L43.0,230.9 L44.0,230.4 L45.0,231.6 L46.0,232.8 L47.0,234.9 L48.0,237.1 L49.0,240.3 L50.0,243.9 L51.0,246.5 L52.0,249.9 L53.0,249.7 L54.0,250.3 L55.0,250.2 L56.0,250.2 L57.0,248.7 L58.0,249.7 L59.0,249.7 L60.0,248.9 L61.0,250.2 L62.0,250.7 L63.0,250.3 L64.0,252.3 L65.0,252.2 L66.0,252.9 L67.0,254.0 L68.0,253.9 L69.0,253.1 L70.0,253.5 L71.0,253.3 L72.0,252.6 L73.0,252.0 L74.0,251.9 L75.0,252.7 L76.0,252.5 L77.0,254.2 L78.0,255.0 L79.0,254.8 L80.0,255.2 L81.0,255.6 L82.0,255.4 L83.0,255.9 L84.0,244.3 L85.0,235.9 L86.0,228.1 L87.0,220.8 L88.0,218.6 L89.0,217.8 L90.0,221.8 L91.0,224.1 L92.0,227.6 L93.0,231.3 L94.0,230.0 L95.0,227.9 L96.0,224.9 L97.0,224.4 L98.0,226.3 L99.0,226.5 L100.0,227.4 L101.0,227.1 L102.0,229.5 L103.0,234.2 L104.0,237.4 L105.0,240.3 L106.0,245.1 L107.0,248.1 L108.0,248.5 L109.0,247.0 L110.0,247.9 L111.0,246.4 L112.0,247.4 L113.0,246.8 L114.0,246.7 L115.0,247.2 L116.0,247.9 L117.0,247.2 L118.0,247.9 L119.0,249.4 L120.0,249.8 L121.0,250.3 L122.0,250.6 L123.0,250.7 L124.0,251.2 L125.0,251.3 L126.0,250.9 L127.0,251.2 L128.0,250.1 L129.0,250.0 L130.0,249.7 L131.0,250.9 L132.0,251.4 L133.0,252.8 L134.0,253.2 L135.0,254.6 L136.0,254.6 L137.0,253.5 L138.0,250.6 L139.0,245.0 L140.0,231.4 L141.0,221.3 L142.0,218.1 L143.0,216.1 L144.0,219.5 L145.0,221.8 L146.0,225.8 L147.0,229.9 L148.0,229.5 L149.0,226.4 L150.0,225.1 L151.0,223.7 L152.0,224.3 L153.0,224.6 L154.0,225.3 L155.0,225.5 L156.0,227.3 L157.0,231.0 L158.0,235.8 L159.0,238.6 L160.0,242.0 L161.0,245.5 L162.0,247.9 L163.0,247.7 L164.0,247.0 L165.0,246.1 L166.0,245.7 L167.0,245.7 L168.0,246.1 L169.0,245.7 L170.0,246.3 L171.0,246.2 L172.0,248.3 L173.0,249.2 L174.0,249.4 L175.0,249.8 L176.0,251.2 L177.0,250.4 L178.0,250.7 L179.0,250.4 L180.0,250.6 L181.0,250.3 L182.0,249.9 L183.0,249.0 L184.0,249.2 L185.0,249.5 L186.0,250.9 L187.0,251.7 L188.0,253.2 L189.0,252.9 L190.0,253.2 L191.0,254.0 L192.0,254.3 L193.0,256.1 L194.0,253.1 L195.0,246.0 L196.0,238.5 L197.0,231.3 L198.0,226.8 L199.0,223.7 L200.0,223.8 L201.0,227.3 L202.0,228.9 L203.0,233.2 L204.0,235.4 L205.0,232.6 L206.0,232.1 L207.0,230.3 L208.0,229.8 L209.0,230.6 L210.0,231.4 L211.0,230.9 L212.0,232.2 L213.0,234.7 L214.0,238.5 L215.0,241.7 L216.0,244.9 L217.0,247.6 L218.0,251.2 L219.0,250.6 L220.0,250.3 L221.0,249.3 L222.0,248.7 L223.0,248.6 L224.0,249.1 L225.0,248.8 L226.0,250.1 L227.0,249.7 L228.0,250.3 L229.0,251.1 L230.0,252.0 L231.0,252.4 L232.0,252.2 L233.0,253.7 L234.0,253.8 L235.0,253.7 L236.0,253.6 L237.0,253.5 L238.0,252.2 L239.0,252.9 L240.0,251.7 L241.0,251.7 L242.0,252.9 L243.0,254.6 L244.0,254.7 L245.0,256.1 L246.0,256.8 L247.0,256.3 L248.0,256.5 L249.0,256.9 L250.0,255.9 L251.0,253.1 L252.0,244.0 L253.0,235.6 L254.0,226.2 L255.0,219.0 L256.0,216.5 L257.0,215.7 L258.0,217.9 L259.0,221.5 L260.0,224.5 L261.0,228.5 L262.0,227.3 L263.0,225.8 L264.0,223.8 L265.0,222.8 L266.0,222.9 L267.0,224.0 L268.0,224.6 L269.0,225.4 L270.0,226.8 L271.0,231.9 L272.0,234.6 L273.0,239.5 L274.0,243.1 L275.0,245.2 L276.0,246.8 L277.0,247.1 L278.0,247.0 L279.0,245.8 L280.0,245.2 L281.0,245.1 L282.0,246.4 L283.0,245.4 L284.0,246.1 L285.0,245.6 L286.0,247.2 L287.0,248.8 L288.0,248.4 L289.0,250.3 L290.0,250.1 L291.0,250.9 L292.0,250.9 L293.0,250.3 L294.0,250.9" fill="none" stroke="#f0f0ff" stroke-width="1"/>
<rect x="26" y="271.7" width="268" height="1.6" fill="#f0f0f4"/>
<g mask="url(#mk2)" opacity="0.35">
<rect x="27.6" y="273.0" width="49.99999999999999" height="22" filter="url(#sprs)"/>
<rect x="82.6" y="273.0" width="50.0" height="22" filter="url(#sprs)"/>
<rect x="136.9" y="273.0" width="50.0" height="22" filter="url(#sprs)"/>
<rect x="193.5" y="273.0" width="50.0" height="22" filter="url(#sprs)"/>
<rect x="250.8" y="273.0" width="43.19999999999999" height="22" filter="url(#sprs)"/>
</g>
<rect x="33.1" y="216.786992" width="1" height="5" fill="#ff3030"/>
<rect x="88.1" y="211.437752" width="1" height="5" fill="#ff3030"/>
<rect x="142.4" y="209.83298" width="1" height="5" fill="#ff3030"/>
<rect x="199.0" y="216.786992" width="1" height="5" fill="#ff3030"/>
<text x="29" y="214" font-size="6.5" fill="#b000f0" textLength="50" lengthAdjust="spacingAndGlyphs">VCursor = 0.00cm/s</text>
<rect x="157" y="336" width="6" height="2" fill="#30c030"/>
</g>
<g>
<rect x="506" y="48" width="268" height="133.5" fill="#000040"/>
<rect x="506" y="48" width="268" height="133.5" filter="url(#spk2)" clip-path="url(#cp3)"/>
<rect x="506" y="56" width="268" height="75" fill="url(#gDark2)" clip-path="url(#cp3)"/>
<path d="M506.0,112.5 L507.0,111.7 L508.0,111.7 L509.0,112.0 L510.0,107.5 L511.0,101.9 L512.0,89.2 L513.0,77.6 L514.0,71.6 L515.0,72.7 L516.0,75.9 L517.0,80.1 L518.0,82.2 L519.0,83.1 L520.0,85.1 L521.0,84.6 L522.0,84.7 L523.0,83.3 L524.0,83.0 L525.0,83.7 L526.0,86.2 L527.0,87.0 L528.0,88.2 L529.0,89.8 L530.0,92.0 L531.0,94.8 L532.0,98.0 L533.0,102.4 L534.0,104.6 L535.0,104.9 L536.0,103.1 L537.0,102.4 L538.0,102.0 L539.0,101.2 L540.0,102.3 L541.0,103.9 L542.0,104.6 L543.0,105.2 L544.0,105.5 L545.0,106.5 L546.0,107.0 L547.0,106.9 L548.0,107.7 L549.0,107.1 L550.0,108.3 L551.0,108.0 L552.0,108.6 L553.0,108.5 L554.0,108.1 L555.0,107.9 L556.0,109.5 L557.0,108.4 L558.0,109.1 L559.0,109.4 L560.0,109.9 L561.0,111.3 L562.0,112.3 L563.0,111.8 L564.0,113.0 L565.0,109.2 L566.0,104.6 L567.0,92.8 L568.0,80.2 L569.0,73.7 L570.0,72.0 L571.0,77.5 L572.0,80.3 L573.0,81.8 L574.0,84.9 L575.0,86.1 L576.0,85.1 L577.0,84.4 L578.0,84.2 L579.0,83.6 L580.0,84.3 L581.0,85.3 L582.0,87.0 L583.0,88.5 L584.0,90.5 L585.0,93.1 L586.0,96.0 L587.0,98.6 L588.0,101.7 L589.0,104.9 L590.0,104.7 L591.0,103.9 L592.0,102.8 L593.0,102.4 L594.0,102.9 L595.0,102.3 L596.0,103.6 L597.0,104.5 L598.0,105.6 L599.0,105.3 L600.0,105.8 L601.0,106.3 L602.0,107.1 L603.0,107.7 L604.0,108.9 L605.0,108.9 L606.0,109.1 L607.0,107.8 L608.0,108.0 L609.0,109.2 L610.0,109.6 L611.0,109.1 L612.0,109.5 L613.0,108.8 L614.0,109.7 L615.0,111.1 L616.0,111.5 L617.0,112.1 L618.0,112.8 L619.0,112.2 L620.0,110.4 L621.0,105.8 L622.0,97.9 L623.0,85.9 L624.0,77.3 L625.0,71.0 L626.0,75.3 L627.0,79.9 L628.0,81.4 L629.0,83.5 L630.0,84.7 L631.0,85.7 L632.0,84.6 L633.0,85.6 L634.0,84.6 L635.0,83.6 L636.0,84.8 L637.0,86.5 L638.0,88.6 L639.0,90.1 L640.0,90.7 L641.0,93.7 L642.0,97.5 L643.0,100.7 L644.0,103.5 L645.0,104.8 L646.0,104.6 L647.0,103.0 L648.0,102.7 L649.0,102.2 L650.0,103.3 L651.0,103.5 L652.0,104.7 L653.0,104.7 L654.0,105.1 L655.0,105.6 L656.0,107.3 L657.0,107.4 L658.0,107.2 L659.0,107.3 L660.0,108.3 L661.0,108.7 L662.0,108.4 L663.0,108.3 L664.0,109.1 L665.0,109.6 L666.0,108.7 L667.0,108.6 L668.0,109.2 L669.0,109.5 L670.0,110.5 L671.0,110.2 L672.0,111.7 L673.0,112.2 L674.0,112.3 L675.0,112.4 L676.0,109.9 L677.0,104.4 L678.0,93.9 L679.0,80.8 L680.0,74.3 L681.0,73.5 L682.0,77.1 L683.0,81.5 L684.0,82.7 L685.0,84.2 L686.0,85.4 L687.0,85.5 L688.0,85.7 L689.0,85.9 L690.0,84.1 L691.0,84.8 L692.0,86.0 L693.0,88.7 L694.0,88.8 L695.0,90.1 L696.0,92.2 L697.0,95.8 L698.0,99.7 L699.0,102.7 L700.0,105.5 L701.0,106.0 L702.0,105.1 L703.0,103.5 L704.0,102.5 L705.0,103.1 L706.0,103.6 L707.0,103.1 L708.0,104.9 L709.0,105.1 L710.0,105.8 L711.0,106.2 L712.0,106.4 L713.0,106.7 L714.0,107.6 L715.0,108.2 L716.0,109.3 L717.0,108.1 L718.0,109.6 L719.0,108.5 L720.0,108.9 L721.0,109.7 L722.0,109.9 L723.0,109.5 L724.0,109.1 L725.0,110.1 L726.0,110.4 L727.0,111.8 L728.0,111.2 L729.0,112.0 L730.0,113.4 L731.0,112.4 L732.0,113.3 L733.0,112.8 L734.0,108.5 L735.0,100.9 L736.0,89.1 L737.0,79.2 L738.0,74.9 L739.0,76.1 L740.0,81.1 L741.0,83.7 L742.0,84.7 L743.0,86.5 L744.0,87.8 L745.0,87.1 L746.0,86.4 L747.0,86.7 L748.0,85.6 L749.0,86.6 L750.0,87.6 L751.0,90.2 L752.0,91.9 L753.0,92.8 L754.0,96.0 L755.0,97.5 L756.0,100.8 L757.0,104.1 L758.0,107.1 L759.0,106.4 L760.0,104.8 L761.0,103.9 L762.0,103.5 L763.0,103.6 L764.0,105.0 L765.0,104.5 L766.0,106.2 L767.0,106.8 L768.0,107.4 L769.0,107.8 L770.0,108.1 L771.0,108.1 L772.0,108.6 L773.0,109.0 L774.0,109.8" fill="none" stroke="#f0f0ff" stroke-width="1"/>
<rect x="506" y="130.7" width="268" height="1.6" fill="#f0f0f4"/>
<g mask="url(#mk3)" opacity="0.15">
<rect x="508.4" y="132" width="50.0" height="22" filter="url(#sprs)"/>
<rect x="563.6" y="132" width="50.0" height="22" filter="url(#sprs)"/>
<rect x="619" y="132" width="50" height="22" filter="url(#sprs)"/>
<rect x="674.6" y="132" width="50.0" height="22" filter="url(#sprs)"/>
<rect x="732.2" y="132" width="41.799999999999955" height="22" filter="url(#sprs)"/>
</g>
<rect x="513.9" y="63.468880999999996" width="1" height="5" fill="#ff3030"/>
<rect x="569.1" y="64.687319" width="1" height="5" fill="#ff3030"/>
<rect x="624.5" y="64.687319" width="1" height="5" fill="#ff3030"/>
<rect x="680.1" y="65.296538" width="1" height="5" fill="#ff3030"/>
<text x="509" y="57" font-size="6.5" fill="#b000f0" textLength="50" lengthAdjust="spacingAndGlyphs">VCursor = 0.00cm/s</text>
<rect x="637" y="177.5" width="6" height="2" fill="#30c030"/>
</g>
<g>
<rect x="506" y="205" width="268" height="135" fill="#000040"/>
<rect x="506" y="205" width="268" height="135" filter="url(#spk2)" clip-path="url(#cp4)"/>
<rect x="506" y="197.0" width="268" height="75" fill="url(#gDark2)" clip-path="url(#cp4)"/>
<path d="M506.0,253.5 L507.0,253.7 L508.0,254.6 L509.0,251.7 L510.0,247.9 L511.0,239.1 L512.0,227.5 L513.0,217.6 L514.0,212.2 L515.0,215.8 L516.0,219.6 L517.0,221.4 L518.0,223.8 L519.0,224.4 L520.0,225.4 L521.0,225.2 L522.0,224.2 L523.0,223.3 L524.0,224.0 L525.0,225.6 L526.0,226.9 L527.0,228.7 L528.0,230.6 L529.0,232.1 L530.0,233.3 L531.0,239.4 L532.0,243.4 L533.0,248.2 L534.0,246.9 L535.0,246.5 L536.0,244.7 L537.0,243.8 L538.0,242.9 L539.0,243.4 L540.0,245.1 L541.0,245.2 L542.0,245.4 L543.0,246.1 L544.0,247.7 L545.0,247.5 L546.0,247.6 L547.0,249.1 L548.0,249.4 L549.0,250.5 L550.0,249.4 L551.0,250.3 L552.0,251.2 L553.0,251.5 L554.0,252.0 L555.0,250.9 L556.0,251.6 L557.0,251.6 L558.0,252.0 L559.0,253.5 L560.0,253.1 L561.0,253.9 L562.0,253.3 L563.0,254.4 L564.0,254.2 L565.0,249.8 L566.0,244.9 L567.0,232.7 L568.0,219.8 L569.0,212.9 L570.0,213.3 L571.0,216.4 L572.0,219.9 L573.0,222.5 L574.0,223.9 L575.0,224.4 L576.0,224.7 L577.0,224.2 L578.0,223.0 L579.0,222.4 L580.0,224.1 L581.0,225.9 L582.0,226.7 L583.0,228.7 L584.0,230.2 L585.0,232.9 L586.0,236.6 L587.0,240.8 L588.0,245.8 L589.0,247.1 L590.0,246.4 L591.0,245.5 L592.0,243.6 L593.0,242.7 L594.0,243.7 L595.0,243.9 L596.0,244.3 L597.0,244.9 L598.0,246.5 L599.0,246.1 L600.0,247.1 L601.0,247.3 L602.0,248.0 L603.0,249.3 L604.0,250.1 L605.0,249.5 L606.0,249.5 L607.0,250.7 L608.0,250.2 L609.0,250.2 L610.0,251.9 L611.0,251.5 L612.0,252.4 L613.0,252.0 L614.0,253.1 L615.0,252.7 L616.0,252.4 L617.0,252.5 L618.0,253.6 L619.0,254.0 L620.0,252.1 L621.0,246.5 L622.0,235.6 L623.0,222.5 L624.0,214.5 L625.0,210.8 L626.0,214.8 L627.0,218.7 L628.0,222.4 L629.0,223.1 L630.0,224.2 L631.0,224.8 L632.0,224.4 L633.0,222.6 L634.0,222.0 L635.0,224.3 L636.0,225.6 L637.0,226.2 L638.0,227.3 L639.0,230.4 L640.0,231.4 L641.0,235.3 L642.0,239.9 L643.0,245.2 L644.0,246.8 L645.0,246.8 L646.0,244.9 L647.0,244.2 L648.0,243.9 L649.0,243.5 L650.0,243.0 L651.0,243.7 L652.0,244.6 L653.0,245.4 L654.0,245.8 L655.0,246.0 L656.0,246.7 L657.0,248.1 L658.0,249.0 L659.0,248.2 L660.0,249.5 L661.0,250.1 L662.0,249.3 L663.0,250.9 L664.0,250.0 L665.0,251.1 L666.0,251.4 L667.0,251.8 L668.0,251.6 L669.0,252.2 L670.0,252.8 L671.0,252.9 L672.0,253.6 L673.0,253.7 L674.0,254.0 L675.0,253.6 L676.0,251.4 L677.0,247.8 L678.0,236.0 L679.0,224.6 L680.0,216.6 L681.0,213.1 L682.0,216.3 L683.0,220.2 L684.0,222.5 L685.0,224.5 L686.0,225.5 L687.0,225.0 L688.0,225.0 L689.0,224.6 L690.0,223.3 L691.0,225.2 L692.0,225.5 L693.0,227.9 L694.0,229.7 L695.0,231.0 L696.0,232.0 L697.0,235.7 L698.0,240.4 L699.0,246.2 L700.0,247.5 L701.0,247.7 L702.0,246.9 L703.0,245.5 L704.0,244.7 L705.0,243.3 L706.0,245.2 L707.0,245.0 L708.0,246.3 L709.0,246.8 L710.0,246.2 L711.0,247.8 L712.0,248.6 L713.0,247.8 L714.0,248.8 L715.0,250.0 L716.0,249.5 L717.0,251.0 L718.0,250.3 L719.0,251.5 L720.0,250.7 L721.0,251.6 L722.0,252.6 L723.0,251.7 L724.0,252.1 L725.0,252.9 L726.0,252.9 L727.0,252.8 L728.0,253.4 L729.0,253.7 L730.0,255.3 L731.0,255.1 L732.0,255.2 L733.0,252.3 L734.0,249.9 L735.0,241.0 L736.0,229.6 L737.0,220.0 L738.0,212.1 L739.0,216.5 L740.0,219.7 L741.0,222.6 L742.0,226.0 L743.0,225.3 L744.0,227.2 L745.0,226.0 L746.0,225.1 L747.0,225.2 L748.0,224.6 L749.0,227.0 L750.0,227.5 L751.0,228.8 L752.0,231.2 L753.0,232.3 L754.0,233.6 L755.0,239.4 L756.0,243.1 L757.0,249.2 L758.0,247.3 L759.0,247.0 L760.0,246.6 L761.0,245.0 L762.0,244.1 L763.0,244.1 L764.0,244.2 L765.0,244.8 L766.0,245.6 L767.0,246.9 L768.0,247.2 L769.0,247.9 L770.0,249.1 L771.0,248.4 L772.0,249.2 L773.0,250.4 L774.0,249.7" fill="none" stroke="#f0f0ff" stroke-width="1"/>
<rect x="506" y="271.7" width="268" height="1.6" fill="#f0f0f4"/>
<g mask="url(#mk4)" opacity="0.8">
<rect x="507.9" y="273.0" width="50.0" height="22" filter="url(#sprs)"/>
<rect x="563.3" y="273.0" width="50.0" height="22" filter="url(#sprs)"/>
<rect x="618.6" y="273.0" width="50.0" height="22" filter="url(#sprs)"/>
<rect x="674.6" y="273.0" width="50.0" height="22" filter="url(#sprs)"/>
<rect x="732" y="273.0" width="42" height="22" filter="url(#sprs)"/>
</g>
<rect x="513.4" y="205.0781" width="1" height="5" fill="#ff3030"/>
<rect x="568.8" y="204.468881" width="1" height="5" fill="#ff3030"/>
<rect x="624.1" y="203.859662" width="1" height="5" fill="#ff3030"/>
<rect x="680.1" y="205.687319" width="1" height="5" fill="#ff3030"/>
<text x="509" y="214" font-size="6.5" fill="#b000f0" textLength="50" lengthAdjust="spacingAndGlyphs">VCursor = 0.00cm/s</text>
<rect x="637" y="336" width="6" height="2" fill="#30c030"/>
</g>
<rect x="297" y="48" width="4.5" height="133.5" fill="url(#gBar)"/>
<rect x="297" y="205" width="4.5" height="134.5" fill="url(#gBar)"/>
<rect x="777" y="48" width="4.5" height="133.5" fill="url(#gBar)"/>
<rect x="777" y="205" width="4.5" height="134.5" fill="url(#gBar)"/>
<text x="22.5" y="59.004999999999995" font-size="6.5" fill="#1a1a2a" font-weight="bold" text-anchor="end">150</text>
<rect x="23" y="56.305" width="3" height="0.9" fill="#222"/>
<text x="22.5" y="83.77" font-size="6.5" fill="#1a1a2a" font-weight="bold" text-anchor="end">100</text>
<rect x="23" y="81.07" width="3" height="0.9" fill="#222"/>
<text x="22.5" y="108.535" font-size="6.5" fill="#1a1a2a" font-weight="bold" text-anchor="end">50</text>
<rect x="23" y="105.835" width="3" height="0.9" fill="#222"/>
<text x="22.5" y="133.3" font-size="6.5" fill="#1a1a2a" font-weight="bold" text-anchor="end">0</text>
<rect x="23" y="130.6" width="3" height="0.9" fill="#222"/>
<text x="22.5" y="158.065" font-size="6.5" fill="#1a1a2a" font-weight="bold" text-anchor="end">-50</text>
<rect x="23" y="155.36499999999998" width="3" height="0.9" fill="#222"/>
<text x="22.5" y="182.83" font-size="6.5" fill="#1a1a2a" font-weight="bold" text-anchor="end">-100</text>
<rect x="23" y="180.13" width="3" height="0.9" fill="#222"/>
<rect x="25" y="48" width="1" height="134" fill="#102030"/>
<text x="22.5" y="71" font-size="6.5" fill="#1a1a2a" font-weight="bold" text-anchor="end">cm/s</text>
<text x="22.5" y="224.17" font-size="6.5" fill="#1a1a2a" font-weight="bold" text-anchor="end">100</text>
<rect x="23" y="221.46999999999997" width="3" height="0.9" fill="#222"/>
<text x="22.5" y="248.935" font-size="6.5" fill="#1a1a2a" font-weight="bold" text-anchor="end">50</text>
<rect x="23" y="246.23499999999999" width="3" height="0.9" fill="#222"/>
<text x="22.5" y="273.7" font-size="6.5" fill="#1a1a2a" font-weight="bold" text-anchor="end">0</text>
<rect x="23" y="271.0" width="3" height="0.9" fill="#222"/>
<text x="22.5" y="298.465" font-size="6.5" fill="#1a1a2a" font-weight="bold" text-anchor="end">-50</text>
<rect x="23" y="295.765" width="3" height="0.9" fill="#222"/>
<text x="22.5" y="323.22999999999996" font-size="6.5" fill="#1a1a2a" font-weight="bold" text-anchor="end">-100</text>
<rect x="23" y="320.53" width="3" height="0.9" fill="#222"/>
<rect x="25" y="205" width="1" height="134" fill="#102030"/>
<text x="22.5" y="234" font-size="6.5" fill="#1a1a2a" font-weight="bold" text-anchor="end">cm/s</text>
<text x="502.5" y="59.004999999999995" font-size="6.5" fill="#1a1a2a" font-weight="bold" text-anchor="end">150</text>
<rect x="503" y="56.305" width="3" height="0.9" fill="#222"/>
<text x="502.5" y="83.77" font-size="6.5" fill="#1a1a2a" font-weight="bold" text-anchor="end">100</text>
<rect x="503" y="81.07" width="3" height="0.9" fill="#222"/>
<text x="502.5" y="108.535" font-size="6.5" fill="#1a1a2a" font-weight="bold" text-anchor="end">50</text>
<rect x="503" y="105.835" width="3" height="0.9" fill="#222"/>
<text x="502.5" y="133.3" font-size="6.5" fill="#1a1a2a" font-weight="bold" text-anchor="end">0</text>
<rect x="503" y="130.6" width="3" height="0.9" fill="#222"/>
<text x="502.5" y="158.065" font-size="6.5" fill="#1a1a2a" font-weight="bold" text-anchor="end">-50</text>
<rect x="503" y="155.36499999999998" width="3" height="0.9" fill="#222"/>
<text x="502.5" y="182.83" font-size="6.5" fill="#1a1a2a" font-weight="bold" text-anchor="end">-100</text>
<rect x="503" y="180.13" width="3" height="0.9" fill="#222"/>
<rect x="505" y="48" width="1" height="134" fill="#102030"/>
<text x="502.5" y="71" font-size="6.5" fill="#1a1a2a" font-weight="bold" text-anchor="end">cm/s</text>
<text x="502.5" y="224.17" font-size="6.5" fill="#1a1a2a" font-weight="bold" text-anchor="end">100</text>
<rect x="503" y="221.46999999999997" width="3" height="0.9" fill="#222"/>
<text x="502.5" y="248.935" font-size="6.5" fill="#1a1a2a" font-weight="bold" text-anchor="end">50</text>
<rect x="503" y="246.23499999999999" width="3" height="0.9" fill="#222"/>
<text x="502.5" y="273.7" font-size="6.5" fill="#1a1a2a" font-weight="bold" text-anchor="end">0</text>
<rect x="503" y="271.0" width="3" height="0.9" fill="#222"/>
<text x="502.5" y="298.465" font-size="6.5" fill="#1a1a2a" font-weight="bold" text-anchor="end">-50</text>
<rect x="503" y="295.765" width="3" height="0.9" fill="#222"/>
<text x="502.5" y="323.22999999999996" font-size="6.5" fill="#1a1a2a" font-weight="bold" text-anchor="end">-100</text>
<rect x="503" y="320.53" width="3" height="0.9" fill="#222"/>
<rect x="505" y="205" width="1" height="134" fill="#102030"/>
<text x="502.5" y="234" font-size="6.5" fill="#1a1a2a" font-weight="bold" text-anchor="end">cm/s</text>
<text x="26" y="190" font-size="6.5" fill="#1a1a2a" text-anchor="middle">0</text>
<text x="119" y="190" font-size="6.5" fill="#1a1a2a" text-anchor="middle">1</text>
<text x="212.4" y="190" font-size="6.5" fill="#1a1a2a" text-anchor="middle">2</text>
<text x="298" y="190" font-size="6.5" fill="#1a1a2a" text-anchor="middle">s</text>
<text x="506" y="190" font-size="6.5" fill="#1a1a2a" text-anchor="middle">0</text>
<text x="599" y="190" font-size="6.5" fill="#1a1a2a" text-anchor="middle">1</text>
<text x="692.4" y="190" font-size="6.5" fill="#1a1a2a" text-anchor="middle">2</text>
<text x="778" y="190" font-size="6.5" fill="#1a1a2a" text-anchor="middle">s</text>
<rect x="339.5" y="35.5" width="92" height="38.5" fill="#d5d5d5" stroke="#4a4a4a" stroke-width="1"/>
<text x="341.8" y="50.3" font-size="10" fill="#111" textLength="19" lengthAdjust="spacingAndGlyphs">HR</text>
<text x="341.8" y="67.3" font-size="10" fill="#111" textLength="14.5" lengthAdjust="spacingAndGlyphs">BP</text>
<text x="356.3" y="67.3" font-size="12.8" fill="#111" textLength="17.3" lengthAdjust="spacingAndGlyphs">m</text>
<text x="386.3" y="59.1" font-size="12" fill="#111" textLength="28" lengthAdjust="spacingAndGlyphs">100</text>
<rect x="339.5" y="75.0" width="92" height="38.0" fill="#008000" stroke="#c8d8d8" stroke-width="1"/>
<text x="341.8" y="89.8" font-size="10" fill="#fff" textLength="19" lengthAdjust="spacingAndGlyphs">VS</text>
<text x="341.8" y="106.8" font-size="12.8" fill="#fff" textLength="36.5" lengthAdjust="spacingAndGlyphs">cm/s</text>
<text x="386.3" y="98.6" font-size="12" fill="#fff" textLength="20" lengthAdjust="spacingAndGlyphs">114</text>
<rect x="339.5" y="114.0" width="92" height="38.0" fill="#0000ff" stroke="#c8d8d8" stroke-width="1"/>
<text x="341.8" y="128.8" font-size="10" fill="#fff" textLength="19.5" lengthAdjust="spacingAndGlyphs">VD</text>
<text x="341.8" y="145.8" font-size="12.8" fill="#fff" textLength="36.5" lengthAdjust="spacingAndGlyphs">cm/s</text>
<text x="386.3" y="137.6" font-size="12" fill="#fff" textLength="20.5" lengthAdjust="spacingAndGlyphs">30</text>
<rect x="339.5" y="153.0" width="92" height="37.5" fill="#d5d5d5" stroke="#4a4a4a" stroke-width="1"/>
<text x="341.8" y="167.8" font-size="10" fill="#111" textLength="10.5" lengthAdjust="spacingAndGlyphs">PI</text>
<text x="386.3" y="176.6" font-size="12" fill="#111" textLength="30" lengthAdjust="spacingAndGlyphs">1.58</text>
<rect x="339.5" y="192.5" width="92" height="36" fill="#d5d5d5" stroke="#4a4a4a" stroke-width="1"/>
<text x="341.8" y="206.5" font-size="10" fill="#111" textLength="19" lengthAdjust="spacingAndGlyphs">HR</text>
<text x="341.8" y="223" font-size="10" fill="#111" textLength="14.5" lengthAdjust="spacingAndGlyphs">BP</text>
<text x="356.3" y="223" font-size="12.8" fill="#111" textLength="17.3" lengthAdjust="spacingAndGlyphs">m</text>
<text x="386.3" y="215.3" font-size="12" fill="#111" textLength="27" lengthAdjust="spacingAndGlyphs">100</text>
<rect x="339.5" y="229.5" width="92" height="36" fill="#d5d5d5" stroke="#4a4a4a" stroke-width="1"/>
<text x="341.8" y="243.5" font-size="10" fill="#111" textLength="19" lengthAdjust="spacingAndGlyphs">VS</text>
<text x="341.8" y="260" font-size="12.8" fill="#111" textLength="36.5" lengthAdjust="spacingAndGlyphs">cm/s</text>
<text x="386.3" y="252.3" font-size="12" fill="#111" textLength="21" lengthAdjust="spacingAndGlyphs">98</text>
<rect x="339.5" y="266.5" width="92" height="36" fill="#d5d5d5" stroke="#4a4a4a" stroke-width="1"/>
<text x="341.8" y="280.5" font-size="10" fill="#111" textLength="19.5" lengthAdjust="spacingAndGlyphs">VD</text>
<text x="341.8" y="297" font-size="12.8" fill="#111" textLength="36.5" lengthAdjust="spacingAndGlyphs">cm/s</text>
<text x="386.3" y="289.3" font-size="12" fill="#111" textLength="16" lengthAdjust="spacingAndGlyphs">31</text>
<rect x="339.5" y="303.5" width="92" height="36" fill="#d5d5d5" stroke="#4a4a4a" stroke-width="1"/>
<text x="341.8" y="317.5" font-size="10" fill="#111" textLength="10.5" lengthAdjust="spacingAndGlyphs">PI</text>
<text x="386.3" y="326.3" font-size="12" fill="#111" textLength="29.6" lengthAdjust="spacingAndGlyphs">1.33</text>
<rect x="819.5" y="35.5" width="92" height="38.5" fill="#d5d5d5" stroke="#4a4a4a" stroke-width="1"/>
<text x="821.8" y="50.3" font-size="10" fill="#111" textLength="19" lengthAdjust="spacingAndGlyphs">HR</text>
<text x="821.8" y="67.3" font-size="10" fill="#111" textLength="14.5" lengthAdjust="spacingAndGlyphs">BP</text>
<text x="836.3" y="67.3" font-size="12.8" fill="#111" textLength="17.3" lengthAdjust="spacingAndGlyphs">m</text>
<text x="866.3" y="59.1" font-size="12" fill="#111" textLength="28" lengthAdjust="spacingAndGlyphs">100</text>
<rect x="819.5" y="75.0" width="92" height="38.0" fill="#ff0000" stroke="#c8d8d8" stroke-width="1"/>
<text x="821.8" y="89.8" font-size="10" fill="#fff" textLength="19" lengthAdjust="spacingAndGlyphs">VS</text>
<text x="821.8" y="106.8" font-size="12.8" fill="#fff" textLength="36.5" lengthAdjust="spacingAndGlyphs">cm/s</text>
<text x="866.3" y="98.6" font-size="12" fill="#fff" textLength="27" lengthAdjust="spacingAndGlyphs">120</text>
<rect x="819.5" y="114.0" width="92" height="38.0" fill="#ff00ff" stroke="#c8d8d8" stroke-width="1"/>
<text x="821.8" y="128.8" font-size="10" fill="#fff" textLength="19.5" lengthAdjust="spacingAndGlyphs">VD</text>
<text x="821.8" y="145.8" font-size="12.8" fill="#fff" textLength="36.5" lengthAdjust="spacingAndGlyphs">cm/s</text>
<text x="866.3" y="137.6" font-size="12" fill="#fff" textLength="20" lengthAdjust="spacingAndGlyphs">35</text>
<rect x="819.5" y="153.0" width="92" height="37.5" fill="#d5d5d5" stroke="#4a4a4a" stroke-width="1"/>
<text x="821.8" y="167.8" font-size="10" fill="#111" textLength="10.5" lengthAdjust="spacingAndGlyphs">PI</text>
<text x="866.3" y="176.6" font-size="12" fill="#111" textLength="30" lengthAdjust="spacingAndGlyphs">1.43</text>
<rect x="819.5" y="192.5" width="92" height="36" fill="#d5d5d5" stroke="#4a4a4a" stroke-width="1"/>
<text x="821.8" y="206.5" font-size="10" fill="#111" textLength="19" lengthAdjust="spacingAndGlyphs">HR</text>
<text x="821.8" y="223" font-size="10" fill="#111" textLength="14.5" lengthAdjust="spacingAndGlyphs">BP</text>
<text x="836.3" y="223" font-size="12.8" fill="#111" textLength="17.3" lengthAdjust="spacingAndGlyphs">m</text>
<text x="866.3" y="215.3" font-size="12" fill="#111" textLength="27.5" lengthAdjust="spacingAndGlyphs">100</text>
<rect x="819.5" y="229.5" width="92" height="36" fill="#d5d5d5" stroke="#4a4a4a" stroke-width="1"/>
<text x="821.8" y="243.5" font-size="10" fill="#111" textLength="19" lengthAdjust="spacingAndGlyphs">VS</text>
<text x="821.8" y="260" font-size="12.8" fill="#111" textLength="36.5" lengthAdjust="spacingAndGlyphs">cm/s</text>
<text x="866.3" y="252.3" font-size="12" fill="#111" textLength="22" lengthAdjust="spacingAndGlyphs">121</text>
<rect x="819.5" y="266.5" width="92" height="36" fill="#d5d5d5" stroke="#4a4a4a" stroke-width="1"/>
<text x="821.8" y="280.5" font-size="10" fill="#111" textLength="19.5" lengthAdjust="spacingAndGlyphs">VD</text>
<text x="821.8" y="297" font-size="12.8" fill="#111" textLength="36.5" lengthAdjust="spacingAndGlyphs">cm/s</text>
<text x="866.3" y="289.3" font-size="12" fill="#111" textLength="20.5" lengthAdjust="spacingAndGlyphs">33</text>
<rect x="819.5" y="303.5" width="92" height="36" fill="#d5d5d5" stroke="#4a4a4a" stroke-width="1"/>
<text x="821.8" y="317.5" font-size="10" fill="#111" textLength="10.5" lengthAdjust="spacingAndGlyphs">PI</text>
<text x="866.3" y="326.3" font-size="12" fill="#111" textLength="20.5" lengthAdjust="spacingAndGlyphs">1.5</text>
<text x="7" y="31" font-size="9.5" fill="#4a4060" textLength="19" lengthAdjust="spacingAndGlyphs" stroke="#4a4060" stroke-width="0.35">MCA</text>
<text x="29" y="31" font-size="9.5" fill="#4a4060" textLength="5" lengthAdjust="spacingAndGlyphs" stroke="#4a4060" stroke-width="0.35">R</text>
<text x="58" y="31" font-size="9.5" fill="#4a4060" textLength="54" lengthAdjust="spacingAndGlyphs">1.6MHz [ROB]</text>
<text x="143.7" y="31" font-size="9.5" fill="#4a4060" textLength="25" lengthAdjust="spacingAndGlyphs">Power</text>
<rect x="172.5" y="20.5" width="36.3" height="14.5" fill="#ff0000"/>
<text x="175" y="31" font-size="9.5" fill="#fff" font-weight="bold" textLength="31" lengthAdjust="spacingAndGlyphs">100mW</text>
<text x="225" y="31" font-size="9.5" fill="#4a4060" textLength="11" lengthAdjust="spacingAndGlyphs">TIC</text>
<rect x="240" y="20.5" width="17.5" height="14.5" fill="#ff0000"/>
<text x="242" y="31" font-size="9.5" fill="#fff" font-weight="bold" textLength="12.5" lengthAdjust="spacingAndGlyphs">1.0</text>
<text x="273.7" y="31" font-size="9.5" fill="#4a4060" textLength="19" lengthAdjust="spacingAndGlyphs">Gate</text>
<text x="297" y="31" font-size="9.5" fill="#4a4060" font-weight="bold" textLength="25.5" lengthAdjust="spacingAndGlyphs">9.8mm</text>
<text x="338.7" y="31" font-size="9.5" fill="#4a4060" textLength="19" lengthAdjust="spacingAndGlyphs">Hoek</text>
<text x="362" y="31" font-size="9.5" fill="#4a4060" font-weight="bold" textLength="8" lengthAdjust="spacingAndGlyphs">0°</text>
<text x="487" y="31" font-size="9.5" fill="#4a4060" textLength="19" lengthAdjust="spacingAndGlyphs" stroke="#4a4060" stroke-width="0.35">MCA</text>
<text x="509" y="31" font-size="9.5" fill="#4a4060" textLength="5" lengthAdjust="spacingAndGlyphs" stroke="#4a4060" stroke-width="0.35">L</text>
<text x="538" y="31" font-size="9.5" fill="#4a4060" textLength="54" lengthAdjust="spacingAndGlyphs">1.6MHz [ROB]</text>
<text x="623.7" y="31" font-size="9.5" fill="#4a4060" textLength="25" lengthAdjust="spacingAndGlyphs">Power</text>
<rect x="652.5" y="20.5" width="36.3" height="14.5" fill="#ff0000"/>
<text x="655" y="31" font-size="9.5" fill="#fff" font-weight="bold" textLength="31" lengthAdjust="spacingAndGlyphs">100mW</text>
<text x="705" y="31" font-size="9.5" fill="#4a4060" textLength="11" lengthAdjust="spacingAndGlyphs">TIC</text>
<rect x="720" y="20.5" width="17.5" height="14.5" fill="#ff0000"/>
<text x="722" y="31" font-size="9.5" fill="#fff" font-weight="bold" textLength="12.5" lengthAdjust="spacingAndGlyphs">1.0</text>
<text x="753.7" y="31" font-size="9.5" fill="#4a4060" textLength="19" lengthAdjust="spacingAndGlyphs">Gate</text>
<text x="777" y="31" font-size="9.5" fill="#4a4060" font-weight="bold" textLength="25.5" lengthAdjust="spacingAndGlyphs">9.8mm</text>
<text x="818.7" y="31" font-size="9.5" fill="#4a4060" textLength="19" lengthAdjust="spacingAndGlyphs">Hoek</text>
<text x="842" y="31" font-size="9.5" fill="#4a4060" font-weight="bold" textLength="8" lengthAdjust="spacingAndGlyphs">0°</text>
<rect x="4" y="35" width="25" height="10" fill="#9653a2"/>
<path d="M10,39 h5 v-2 l4,3 l-4,3 v-2 h-5 z" fill="#ff2020"/>
<path d="M23,36.5 h-2.5 v7 h2.5" fill="none" stroke="#fff" stroke-width="1.6"/>
<text x="34.5" y="43.5" font-size="9.5" fill="#e4f0f0" textLength="23" lengthAdjust="spacingAndGlyphs">Depth</text>
<text x="62" y="43.5" font-size="9.5" fill="#e4f0f0" font-weight="bold" textLength="33.7" lengthAdjust="spacingAndGlyphs">45.8mm</text>
<text x="101.7" y="43.5" font-size="9.5" fill="#e4f0f0" textLength="17" lengthAdjust="spacingAndGlyphs">Gain</text>
<text x="123.7" y="43.5" font-size="9.5" fill="#e4f0f0" font-weight="bold" textLength="4.5" lengthAdjust="spacingAndGlyphs">4</text>
<rect x="4" y="192.5" width="25" height="10" fill="#9653a2"/>
<path d="M10,196.5 h5 v-2 l4,3 l-4,3 v-2 h-5 z" fill="#ff2020"/>
<path d="M23,194.0 h-2.5 v7 h2.5" fill="none" stroke="#fff" stroke-width="1.6"/>
<text x="34.5" y="201.0" font-size="9.5" fill="#e4f0f0" textLength="23" lengthAdjust="spacingAndGlyphs">Depth</text>
<text x="62" y="201.0" font-size="9.5" fill="#e4f0f0" font-weight="bold" textLength="33.7" lengthAdjust="spacingAndGlyphs">55.6mm</text>
<text x="101.7" y="201.0" font-size="9.5" fill="#e4f0f0" textLength="17" lengthAdjust="spacingAndGlyphs">Gain</text>
<text x="123.7" y="201.0" font-size="9.5" fill="#e4f0f0" font-weight="bold" textLength="4.5" lengthAdjust="spacingAndGlyphs">4</text>
<rect x="484" y="35" width="25" height="10" fill="#9653a2"/>
<path d="M490,39 h5 v-2 l4,3 l-4,3 v-2 h-5 z" fill="#ff2020"/>
<path d="M503,36.5 h-2.5 v7 h2.5" fill="none" stroke="#fff" stroke-width="1.6"/>
<text x="514.5" y="43.5" font-size="9.5" fill="#2a2a3a" textLength="23" lengthAdjust="spacingAndGlyphs">Depth</text>
<text x="542" y="43.5" font-size="9.5" fill="#2a2a3a" font-weight="bold" textLength="33.7" lengthAdjust="spacingAndGlyphs">49.7mm</text>
<text x="581.7" y="43.5" font-size="9.5" fill="#2a2a3a" textLength="17" lengthAdjust="spacingAndGlyphs">Gain</text>
<text x="603.7" y="43.5" font-size="9.5" fill="#2a2a3a" font-weight="bold" textLength="4.5" lengthAdjust="spacingAndGlyphs">0</text>
<rect x="484" y="192.5" width="25" height="10" fill="#9653a2"/>
<path d="M490,196.5 h5 v-2 l4,3 l-4,3 v-2 h-5 z" fill="#ff2020"/>
<path d="M503,194.0 h-2.5 v7 h2.5" fill="none" stroke="#fff" stroke-width="1.6"/>
<text x="514.5" y="201.0" font-size="9.5" fill="#e4f0f0" textLength="23" lengthAdjust="spacingAndGlyphs">Depth</text>
<text x="542" y="201.0" font-size="9.5" fill="#e4f0f0" font-weight="bold" textLength="33.7" lengthAdjust="spacingAndGlyphs">59.5mm</text>
<text x="581.7" y="201.0" font-size="9.5" fill="#e4f0f0" textLength="17" lengthAdjust="spacingAndGlyphs">Gain</text>
<text x="603.7" y="201.0" font-size="9.5" fill="#e4f0f0" font-weight="bold" textLength="4.5" lengthAdjust="spacingAndGlyphs">4</text>
<rect x="312" y="35" width="25" height="10" fill="#9653a2"/>
<path d="M319,39 h2 l3,-2.5 v8 l-3,-2.5 h-2 z" fill="#fff"/>
<path d="M325.5,38 q1.5,2 0,4 M327,37 q2.5,3 0,6" fill="none" stroke="#fff" stroke-width="0.9"/>
<path d="M319,37 l8,7" stroke="#fff" stroke-width="1.2"/>
<rect x="312" y="192" width="25" height="10" fill="#9653a2"/>
<path d="M319,196 h2 l3,-2.5 v8 l-3,-2.5 h-2 z" fill="#fff"/>
<path d="M325.5,195 q1.5,2 0,4 M327,194 q2.5,3 0,6" fill="none" stroke="#fff" stroke-width="0.9"/>
<path d="M319,194 l8,7" stroke="#fff" stroke-width="1.2"/>
<rect x="792.5" y="35" width="23" height="10" fill="#ffffff"/>
<path d="M799.5,38.5 h2 l3,-2.5 v8 l-3,-2.5 h-2 z" fill="#ff2020"/>
<path d="M806.0,38 q1.5,2 0,4 M807.5,37 q2.5,3 0,6" fill="none" stroke="#ff2020" stroke-width="0.9"/>
<rect x="792" y="192" width="25" height="10" fill="#9653a2"/>
<path d="M799,196 h2 l3,-2.5 v8 l-3,-2.5 h-2 z" fill="#fff"/>
<path d="M805.5,195 q1.5,2 0,4 M807,194 q2.5,3 0,6" fill="none" stroke="#fff" stroke-width="0.9"/>
<path d="M799,194 l8,7" stroke="#fff" stroke-width="1.2"/>
<rect x="6.7" y="4.3" width="13.4" height="1.6" fill="#ffffff"/>
<rect x="6.7" y="8.7" width="13.4" height="1.6" fill="#ffffff"/>
<rect x="6.7" y="13.1" width="13.4" height="1.6" fill="#ffffff"/>
<path d="M37,2.2 h10.5 l2.5,2.5 v10 q0,1.2 -1.2,1.2 h-11.8 q-1.2,0 -1.2,-1.2 v-11.3 q0,-1.2 1.2,-1.2 z" fill="#fff"/>
<rect x="38.8" y="2.2" width="6.6" height="4.4" fill="#695d7b"/>
<rect x="43.2" y="3" width="1.4" height="3.2" fill="#ffffff"/>
<rect x="38" y="10.3" width="9.8" height="4.4" fill="#695d7b"/>
<path d="M64.5,4 h5.5 v9 h-7 v-7.5 z" fill="#fff"/>
<rect x="64.5" y="7" width="3.5" height="0.7" fill="#b8b8c8"/>
<rect x="64.5" y="9" width="3.5" height="0.7" fill="#b8b8c8"/>
<rect x="64.5" y="11" width="3.5" height="0.7" fill="#b8b8c8"/>
<circle cx="73.5" cy="8.3" r="4" fill="#695d7b" stroke="#fff" stroke-width="1.4"/>
<path d="M76.3,11.2 l2.6,3.6" stroke="#fff" stroke-width="1.8" stroke-linecap="round"/>
<path d="M141,2.5 a6,6 0 0 0 -8.5,8 l2,2" fill="none" stroke="#ffffff" stroke-width="1.4"/>
<ellipse cx="137" cy="6.6" rx="3" ry="3" fill="#ee1010"/>
<rect x="137.5" y="4" width="12.3" height="13.1" fill="#ffffff"/>
<path d="M139,15.5 q2,-1 3,-3 l1,-8 l1.5,9 l1.5,-3 l1,3" fill="none" stroke="#9a9aa8" stroke-width="0.7"/>
<ellipse cx="137" cy="6.6" rx="3" ry="3" fill="#ee1010"/>
<text x="152" y="7.6" font-size="8.3" fill="#ffffff" textLength="22" lengthAdjust="spacingAndGlyphs" stroke="#675b79" stroke-width="0.2">TCD</text>
<text x="151.5" y="17" font-size="12.3" fill="#ffffff" textLength="40" lengthAdjust="spacingAndGlyphs" stroke="#675b79" stroke-width="0.3">monit.</text>
<circle cx="245.4" cy="6.3" r="3.3" fill="#fff"/>
<path d="M240.7,16 v-3.2 a4.7,3.3 0 0 1 9.4,0 v3.2 z" fill="#fff"/>
<text x="253" y="13.8" font-size="10" fill="#ffffff" textLength="74.5" lengthAdjust="spacingAndGlyphs">Heynemann Peter</text>
<rect x="376.6" y="2.6" width="13" height="14" rx="1.2" fill="none" stroke="#d4cce0" stroke-width="1"/>
<path d="M376.1,6.3 v-2.7 q0,-1.5 1.5,-1.5 h11 q1.5,0 1.5,1.5 v2.7 z" fill="#fff"/>
<text x="378.8" y="14.1" font-size="8.6" fill="#ffffff" font-weight="bold" textLength="8.2" lengthAdjust="spacingAndGlyphs">31</text>
<text x="393.7" y="13.8" font-size="10" fill="#ffffff" textLength="45" lengthAdjust="spacingAndGlyphs">29/11/2019</text>
<text x="445" y="13.8" font-size="10" fill="#ffffff" textLength="31" lengthAdjust="spacingAndGlyphs">12:12:32</text>
<circle cx="550.4" cy="10" r="5.6" fill="none" stroke="#fff" stroke-width="1.3"/>
<path d="M550.4,10 l2,-3" stroke="#fff" stroke-width="1.2"/>
<path d="M545.5,4.5 l1.8,-1.5 M555.3,4.5 l-1.8,-1.5" stroke="#fff" stroke-width="1.2"/>
<text x="560.7" y="13.8" font-size="10" fill="#ffffff" textLength="33.8" lengthAdjust="spacingAndGlyphs">00:21:37</text>
<text x="643" y="13.8" font-size="10" fill="#ffffff" textLength="115.7" lengthAdjust="spacingAndGlyphs">TCDM ... Bilateral Multigate</text>
<text x="767.5" y="13.8" font-size="10" fill="#ffffff" font-weight="bold" font-style="italic" textLength="37.5" lengthAdjust="spacingAndGlyphs">ARCHIEF</text>
<path d="M855.5,3.5 h11 v11.5 h-11 z" fill="#fff"/>
<rect x="857" y="6" width="7" height="1" fill="#675b79"/>
<rect x="857" y="8.5" width="7" height="1" fill="#675b79"/>
<rect x="857" y="11" width="7" height="1" fill="#675b79"/>
<path d="M864,12.5 l7,-8 l1.3,1.2 l-7,8 l-2,0.6 z" fill="#fff" stroke="#675b79" stroke-width="0.6"/>
<circle cx="885.2" cy="9" r="5.62" fill="#fff"/>
<rect x="883.83" y="1.40" width="2.74" height="3.80" rx="0.4" fill="#fff" transform="rotate(0.0 885.2 9)"/>
<rect x="883.83" y="1.40" width="2.74" height="3.80" rx="0.4" fill="#fff" transform="rotate(45.0 885.2 9)"/>
<rect x="883.83" y="1.40" width="2.74" height="3.80" rx="0.4" fill="#fff" transform="rotate(90.0 885.2 9)"/>
<rect x="883.83" y="1.40" width="2.74" height="3.80" rx="0.4" fill="#fff" transform="rotate(135.0 885.2 9)"/>
<rect x="883.83" y="1.40" width="2.74" height="3.80" rx="0.4" fill="#fff" transform="rotate(180.0 885.2 9)"/>
<rect x="883.83" y="1.40" width="2.74" height="3.80" rx="0.4" fill="#fff" transform="rotate(225.0 885.2 9)"/>
<rect x="883.83" y="1.40" width="2.74" height="3.80" rx="0.4" fill="#fff" transform="rotate(270.0 885.2 9)"/>
<rect x="883.83" y="1.40" width="2.74" height="3.80" rx="0.4" fill="#fff" transform="rotate(315.0 885.2 9)"/>
<circle cx="885.2" cy="9" r="2.4" fill="#695d7b"/>
<rect x="908.6" y="9" width="18.3" height="5" fill="#ffffff"/>
<rect x="939.3" y="2.9" width="12.7" height="12.5" fill="#e4e4e4"/>
<rect x="962" y="0" width="18" height="19" fill="#ffffff"/>
<path d="M965.5,3.5 l11,11 M976.5,3.5 l-11,11" stroke="#675b79" stroke-width="1.6"/>
<path d="M959,20.5 h21 v39.5 h-21 z" fill="#ffffff"/>
<path d="M959,20.5 h17 l-17,33.5 z" fill="#404448"/>
<path d="M965,43 l2,-2 l1.5,3 l1.5,-7 l2,9 l1.5,-5 l2,3 h4.5" fill="none" stroke="#d02020" stroke-width="0.9"/>
<path d="M963,44 l3,-2 l1.5,3 l2,-6 l1.5,7 l2,-3 l5,2" fill="none" stroke="#20a040" stroke-width="0.7"/>
<rect x="959" y="61" width="21" height="40" fill="#8b5c9e"/>
<path d="M959.5,100.5 v-39 h21" fill="none" stroke="#c8bcd8" stroke-width="0.9"/>
<text x="961.5" y="80.6" font-size="16.5" fill="#f4eef8" textLength="16.5" lengthAdjust="spacingAndGlyphs">m</text>
<text x="965.5" y="89.8" font-size="8" fill="#40c040" textLength="9.5" lengthAdjust="spacingAndGlyphs">on</text>
<rect x="0" y="339.8" width="980" height="2" fill="#2a7f86"/>
<rect x="0" y="341.6" width="980" height="26" fill="url(#gPlay)"/>
<rect x="0" y="367.5" width="980" height="1.5" fill="#2f848b"/>
<circle cx="100.5" cy="355.5" r="4.3" fill="none" stroke="#e8f4f4" stroke-width="1.1"/>
<path d="M100.5,355.5 l1.5,-2.5 M96.5,351.3 l1.3,-1 M104.5,351.3 l-1.3,-1" stroke="#e8f4f4" stroke-width="1"/>
<text x="113.8" y="358.5" font-size="9.5" fill="#eef6f6" textLength="37.5" lengthAdjust="spacingAndGlyphs">00:00:00</text>
<rect x="156.5" y="354" width="255" height="2.2" fill="#3cc0c0"/>
<ellipse cx="298.8" cy="355" rx="6.3" ry="4.2" fill="#4fd0d0" stroke="#a0e8e8" stroke-width="0.7"/>
<circle cx="298.8" cy="355" r="1.3" fill="none" stroke="#a0e8e8" stroke-width="0.5"/>
<text x="300" y="366.5" font-size="9.5" fill="#eef6f6" textLength="34.7" lengthAdjust="spacingAndGlyphs">00:12:07</text>
<text x="416.7" y="358.5" font-size="9.5" fill="#eef6f6" textLength="34.3" lengthAdjust="spacingAndGlyphs">00:21:37</text>
<path d="M462.8,355 l6.75,-5.5 v11 z M469.55,355 l6.75,-5.5 v11 z" fill="#fff"/>
<path d="M593.5,355 l-6.75,-5.5 v11 z M586.75,355 l-6.75,-5.5 v11 z" fill="#fff"/>
<path d="M495.4,355 l8.2,-6 v12 z" fill="#fff"/>
<path d="M561.5,355 l-8.2,-6 v12 z" fill="#fff"/>
<circle cx="528.3" cy="355" r="9.5" fill="#29bcbf"/>
<path d="M525,349.5 l8.5,5.5 l-8.5,5.5 z" fill="#fff"/>
<rect x="696.5" y="345.5" width="25.5" height="19" fill="none" stroke="#a8c8cc" stroke-width="0.9"/>
<rect x="699.8" y="346" width="2.4" height="17.5" fill="#ffffff"/>
<path d="M701,346 q5,0.5 8,2.5 q4,2 8,6.5 q-5,-1.5 -8,0.5 q-3,0.6 -8,0.4 z" fill="#fff"/>
<text x="706.5" y="363.2" font-size="11.5" fill="#18e818" textLength="11" lengthAdjust="spacingAndGlyphs" stroke="#4f8d93" stroke-width="0.25">m</text>
<rect x="817.5" y="345.5" width="21.5" height="19" fill="none" stroke="#a8cacd" stroke-width="0.9"/>
<path d="M822,352.5 h2.5 l4,-3.5 v12 l-4,-3.5 h-2.5 z" fill="#fff"/>
<path d="M830.5,352.3 q1.4,2.7 0,5.4 M832.5,351 q2.4,4 0,8 M834.5,349.7 q3.4,5.3 0,10.6" fill="none" stroke="#fff" stroke-width="0.8"/>
<rect x="842.8" y="349" width="84" height="11.8" rx="5.9" fill="none" stroke="#7cc4c6" stroke-width="1.3"/>
<rect x="844" y="350.3" width="53" height="9.2" rx="4.6" fill="#dce8ea"/>
<circle cx="896.4" cy="355" r="6.6" fill="#b8d8ea" stroke="#ffffff" stroke-width="1.4"/>
<rect x="0" y="368" width="980" height="184" fill="#3f8187"/>
<rect x="2.5" y="369" width="571" height="180" fill="#dde8eb"/>
<text x="4.2" y="383" fill="#2d6b72" textLength="43" lengthAdjust="spacingAndGlyphs" stroke="#dde8eb" stroke-width="0.3"><tspan font-size="10.61">T</tspan><tspan font-size="13.49">ren</tspan><tspan font-size="10.61">D</tspan></text>
<text x="7.6" y="395.4" fill="#2d6b72" textLength="47" lengthAdjust="spacingAndGlyphs" stroke="#dde8eb" stroke-width="0.3"><tspan font-size="9.85">-</tspan><tspan font-size="12.52">even</tspan><tspan font-size="9.85">T</tspan><tspan font-size="9.85">-</tspan></text>
<rect x="2.5" y="430" width="77" height="58" fill="url(#gEmb)"/>
<rect x="2.5" y="490.7" width="77" height="58.5" fill="url(#gTool)"/>
<rect x="79.5" y="428" width="2.5" height="121" fill="#3f8187"/>
<rect x="0" y="428" width="82" height="2" fill="#3f8187"/>
<rect x="0" y="488" width="82" height="2.7" fill="#3f8187"/>
<text x="3.4" y="444" fill="#9a559e" textLength="51" lengthAdjust="spacingAndGlyphs" stroke="#86c4c7" stroke-width="0.3"><tspan font-size="13.10">em</tspan><tspan font-size="10.30">BOLI</tspan></text>
<text x="3.8" y="505.2" fill="#9a559e" textLength="59.5" lengthAdjust="spacingAndGlyphs" stroke="#8cc9cc" stroke-width="0.3"><tspan font-size="10.30">TOOLB</tspan><tspan font-size="13.10">ar</tspan></text>
<rect x="89" y="376.2" width="10.8" height="10" fill="#ff0000"/>
<text x="101" y="385" font-size="8.5" fill="#303040" textLength="9.5" lengthAdjust="spacingAndGlyphs">Vs</text>
<rect x="131.4" y="376.2" width="10.8" height="10" fill="#008000"/>
<text x="143.4" y="385" font-size="8.5" fill="#303040" textLength="9.5" lengthAdjust="spacingAndGlyphs">Vs</text>
<rect x="172.7" y="376.2" width="10.8" height="10" fill="#0000ff"/>
<text x="184.7" y="385" font-size="8.5" fill="#303040" textLength="9.5" lengthAdjust="spacingAndGlyphs">Vd</text>
<rect x="214.4" y="376.2" width="10.8" height="10" fill="#ff00ff"/>
<text x="226.4" y="385" font-size="8.5" fill="#303040" textLength="9.5" lengthAdjust="spacingAndGlyphs">Vd</text>
<path d="M495.28,379.15 A6.3,6.3 0 0 1 506.91,378.64" fill="none" stroke="#2ab8bc" stroke-width="2.8"/>
<path d="M507.12,383.45 A6.3,6.3 0 0 1 495.49,383.96" fill="none" stroke="#2ab8bc" stroke-width="2.8"/>
<path d="M490.9,380.1 h8 l-4,4.8 z" fill="#2ab8bc"/>
<path d="M503.5,382.5 h8 l-4,-4.8 z" fill="#2ab8bc"/>
<circle cx="529.3" cy="381.3" r="6.88" fill="#2ab8bc"/>
<rect x="527.63" y="372.00" width="3.35" height="4.65" rx="0.4" fill="#2ab8bc" transform="rotate(0.0 529.3 381.3)"/>
<rect x="527.63" y="372.00" width="3.35" height="4.65" rx="0.4" fill="#2ab8bc" transform="rotate(45.0 529.3 381.3)"/>
<rect x="527.63" y="372.00" width="3.35" height="4.65" rx="0.4" fill="#2ab8bc" transform="rotate(90.0 529.3 381.3)"/>
<rect x="527.63" y="372.00" width="3.35" height="4.65" rx="0.4" fill="#2ab8bc" transform="rotate(135.0 529.3 381.3)"/>
<rect x="527.63" y="372.00" width="3.35" height="4.65" rx="0.4" fill="#2ab8bc" transform="rotate(180.0 529.3 381.3)"/>
<rect x="527.63" y="372.00" width="3.35" height="4.65" rx="0.4" fill="#2ab8bc" transform="rotate(225.0 529.3 381.3)"/>
<rect x="527.63" y="372.00" width="3.35" height="4.65" rx="0.4" fill="#2ab8bc" transform="rotate(270.0 529.3 381.3)"/>
<rect x="527.63" y="372.00" width="3.35" height="4.65" rx="0.4" fill="#2ab8bc" transform="rotate(315.0 529.3 381.3)"/>
<circle cx="529.3" cy="381.3" r="3.3" fill="#dde8eb"/>
<rect x="547" y="372.2" width="21" height="18.5" fill="#2ab8bc"/>
<circle cx="556" cy="380.2" r="4.6" fill="none" stroke="#fff" stroke-width="1.3"/>
<path d="M559.3,383.5 l4.3,4.3" stroke="#fff" stroke-width="1.6"/>
<path d="M553.7,380.2 h4.6" stroke="#fff" stroke-width="1"/>
<path d="M556,377.9 v4.6" stroke="#fff" stroke-width="1"/>
<rect x="547" y="401.7" width="21" height="18.5" fill="#2ab8bc"/>
<circle cx="556" cy="409.7" r="4.6" fill="none" stroke="#fff" stroke-width="1.3"/>
<path d="M559.3,413.0 l4.3,4.3" stroke="#fff" stroke-width="1.6"/>
<path d="M553.7,409.7 h4.6" stroke="#fff" stroke-width="1"/>
<rect x="547" y="430.7" width="21" height="18.5" fill="#2ab8bc"/>
<circle cx="556" cy="438.7" r="4.6" fill="none" stroke="#fff" stroke-width="1.3"/>
<path d="M559.3,442.0 l4.3,4.3" stroke="#fff" stroke-width="1.6"/>
<path d="M556,430.7 l-2,2.2 h4 z M556,447.2 l-2,-2.2 h4 z M548,438.7 l2.2,-2 v4 z M564.5,438.7 l-2.2,-2 v4 z" fill="#fff"/>
<rect x="544.5" y="504.5" width="25.5" height="18.5" fill="#f4f8f8" stroke="#c8d0d2" stroke-width="1"/>
<path d="M552,508.5 l4.5,5 l-4.5,5 M557.5,508.5 l4.5,5 l-4.5,5" fill="none" stroke="#2ab8bc" stroke-width="2.2"/>
<rect x="544.5" y="529.5" width="25.5" height="18" fill="#f4f8f8" stroke="#c8d0d2" stroke-width="1"/>
<path d="M551,541.5 l6.5,-6 l6.5,6 z" fill="#2a7f86"/>
<rect x="107" y="397" width="410.5" height="140.20000000000005" fill="#ffffff"/>
<rect x="107" y="397" width="109" height="140.20000000000005" fill="#94efef"/>
<rect x="108.0" y="397" width="1" height="140.2" fill="#e8ffff" opacity="0.68"/>
<rect x="112.0" y="397" width="1" height="140.2" fill="#e8ffff" opacity="0.84"/>
<rect x="115.0" y="397" width="1" height="140.2" fill="#e8ffff" opacity="0.68"/>
<rect x="119.0" y="397" width="1" height="140.2" fill="#e8ffff" opacity="0.58"/>
<rect x="123.0" y="397" width="1" height="140.2" fill="#e8ffff" opacity="0.69"/>
<rect x="127.0" y="397" width="1" height="140.2" fill="#e8ffff" opacity="0.82"/>
<rect x="129.0" y="397" width="1" height="140.2" fill="#e8ffff" opacity="0.68"/>
<rect x="131.0" y="397" width="1" height="140.2" fill="#e8ffff" opacity="0.54"/>
<rect x="136.0" y="397" width="1" height="140.2" fill="#e8ffff" opacity="0.75"/>
<rect x="140.0" y="397" width="1" height="140.2" fill="#e8ffff" opacity="0.89"/>
<rect x="143.0" y="397" width="1" height="140.2" fill="#e8ffff" opacity="0.76"/>
<rect x="147.0" y="397" width="1" height="140.2" fill="#e8ffff" opacity="0.76"/>
<rect x="151.0" y="397" width="1" height="140.2" fill="#e8ffff" opacity="0.51"/>
<rect x="155.0" y="397" width="1" height="140.2" fill="#e8ffff" opacity="0.53"/>
<rect x="157.0" y="397" width="1" height="140.2" fill="#e8ffff" opacity="0.58"/>
<rect x="159.0" y="397" width="1" height="140.2" fill="#e8ffff" opacity="0.74"/>
<rect x="162.0" y="397" width="1" height="140.2" fill="#e8ffff" opacity="0.63"/>
<rect x="166.0" y="397" width="1" height="140.2" fill="#e8ffff" opacity="0.84"/>
<rect x="170.0" y="397" width="1" height="140.2" fill="#e8ffff" opacity="0.59"/>
<rect x="173.0" y="397" width="1" height="140.2" fill="#e8ffff" opacity="0.70"/>
<rect x="178.0" y="397" width="1" height="140.2" fill="#e8ffff" opacity="0.53"/>
<rect x="183.0" y="397" width="1" height="140.2" fill="#e8ffff" opacity="0.61"/>
<rect x="187.0" y="397" width="1" height="140.2" fill="#e8ffff" opacity="0.90"/>
<rect x="189.0" y="397" width="1" height="140.2" fill="#e8ffff" opacity="0.78"/>
<rect x="192.0" y="397" width="1" height="140.2" fill="#e8ffff" opacity="0.80"/>
<rect x="196.0" y="397" width="1" height="140.2" fill="#e8ffff" opacity="0.62"/>
<rect x="198.0" y="397" width="1" height="140.2" fill="#e8ffff" opacity="0.73"/>
<rect x="200.0" y="397" width="1" height="140.2" fill="#e8ffff" opacity="0.66"/>
<rect x="203.0" y="397" width="1" height="140.2" fill="#e8ffff" opacity="0.65"/>
<rect x="205.0" y="397" width="1" height="140.2" fill="#e8ffff" opacity="0.84"/>
<rect x="207.0" y="397" width="1" height="140.2" fill="#e8ffff" opacity="0.59"/>
<rect x="209.0" y="397" width="1" height="140.2" fill="#e8ffff" opacity="0.69"/>
<rect x="214.0" y="397" width="1" height="140.2" fill="#e8ffff" opacity="0.66"/>
<path d="M107,432.5 H517.5" stroke="#d8d8d8" stroke-width="0.7" stroke-dasharray="1.5,2.5"/>
<path d="M107,467.4 H517.5" stroke="#d8d8d8" stroke-width="0.7" stroke-dasharray="1.5,2.5"/>
<path d="M107,502 H517.5" stroke="#d8d8d8" stroke-width="0.7" stroke-dasharray="1.5,2.5"/>
<path d="M175.6,397 V537.2" stroke="#d8d8d8" stroke-width="0.7" stroke-dasharray="1.5,2.5"/>
<path d="M244.2,397 V537.2" stroke="#d8d8d8" stroke-width="0.7" stroke-dasharray="1.5,2.5"/>
<path d="M312.8,397 V537.2" stroke="#d8d8d8" stroke-width="0.7" stroke-dasharray="1.5,2.5"/>
<path d="M381.4,397 V537.2" stroke="#d8d8d8" stroke-width="0.7" stroke-dasharray="1.5,2.5"/>
<path d="M450,397 V537.2" stroke="#d8d8d8" stroke-width="0.7" stroke-dasharray="1.5,2.5"/>
<rect x="107" y="533" width="106" height="4.2" fill="#10e0e0"/>
<path d="M204,537 l6,-5 l6,0 l6,5 z" fill="#20e0e0"/>
<path d="M209.3,397 V537.2" stroke="#20b020" stroke-width="1"/>
<path d="M275.3,397 V537.2" stroke="#80f080" stroke-width="1"/>
<path d="M337.4,397 V537.2" stroke="#404040" stroke-width="1"/>
<path d="M377.4,397 V537.2" stroke="#70f070" stroke-width="1.3"/>
<path d="M492.5,397 V537.2" stroke="#80f080" stroke-width="1"/>
<path d="M503.9,397 V537.2" stroke="#80f080" stroke-width="1"/>
<path d="M270.3,537.2 l5,-4.5 l5,4.5 z" fill="#10d010"/>
<path d="M332.4,537.2 l5,-4.5 l5,4.5 z" fill="#10d010"/>
<path d="M372.4,537.2 l5,-4.5 l5,4.5 z" fill="#10d010"/>
<path d="M487.5,537.2 l5,-4.5 l5,4.5 z" fill="#10d010"/>
<path d="M498.9,537.2 l5,-4.5 l5,4.5 z" fill="#10d010"/>
<path d="M108.0,460.6 L109.0,460.3 L110.0,451.8 L111.0,448.9 L112.0,453.0 L113.0,461.0 L114.0,461.2 L115.0,458.6 L116.0,458.2 L117.0,458.6 L118.0,461.5 L119.0,458.4 L120.0,457.2 L121.0,457.2 L122.0,457.7 L123.0,458.9 L124.0,460.7 L125.0,465.1 L126.0,465.1 L127.0,460.6 L128.0,461.6 L129.0,454.4 L130.0,455.9 L131.0,455.6 L132.0,458.0 L133.0,462.9 L134.0,468.8 L135.0,469.6 L136.0,468.7 L137.0,470.6 L138.0,469.5 L139.0,468.7 L140.0,459.0 L141.0,458.3 L142.0,454.6 L143.0,458.4 L144.0,458.7 L145.0,457.6 L146.0,459.4 L147.0,457.5 L148.0,461.1 L149.0,457.8 L150.0,465.3 L151.0,462.5 L152.0,461.7 L153.0,456.2 L154.0,457.6 L155.0,457.5 L156.0,463.6 L157.0,464.3 L158.0,465.4 L159.0,465.1 L160.0,470.9 L161.0,463.8 L162.0,462.3 L163.0,466.5 L164.0,463.4 L165.0,463.5 L166.0,465.2 L167.0,461.3 L168.0,462.2 L169.0,460.8 L170.0,456.3 L171.0,447.2 L172.0,448.5 L173.0,453.0 L174.0,447.6 L175.0,450.2 L176.0,451.4 L177.0,455.8 L178.0,453.3 L179.0,458.6 L180.0,467.3 L181.0,466.8 L182.0,461.1 L183.0,463.3 L184.0,456.6 L185.0,458.5 L186.0,453.6 L187.0,457.3 L188.0,461.2 L189.0,459.3 L190.0,459.4 L191.0,455.5 L192.0,453.7 L193.0,454.6 L194.0,462.5 L195.0,458.7 L196.0,454.9 L197.0,465.6 M217.0,459.8 L218.0,456.1 L219.0,457.4 L220.0,450.8 L221.0,451.8 L222.0,450.7 L223.0,456.0 L224.0,455.6 L225.0,463.2 L226.0,466.6 L227.0,467.4 L228.0,460.9 L229.0,459.7 L230.0,458.3 L231.0,456.6 L232.0,459.0 L233.0,455.3 L234.0,459.6 L235.0,461.4 L236.0,464.2 L237.0,470.6 L238.0,464.8 L239.0,465.4 L240.0,460.6 L241.0,461.1 L242.0,467.6 L243.0,459.1 L244.0,455.0 L245.0,457.9 L246.0,453.8 L247.0,458.4 L248.0,455.8 L249.0,458.4 L250.0,456.0 L251.0,455.2 L252.0,459.4 L253.0,461.8 L254.0,459.5 L255.0,460.8 L256.0,462.0 L257.0,462.2 L258.0,463.1 L259.0,461.6 L260.0,457.9 L261.0,464.7 L262.0,466.0 L263.0,462.1 L264.0,459.8 L265.0,462.6 L266.0,466.5 L267.0,463.8 L268.0,471.3 L269.0,472.8 L270.0,473.5 L271.0,477.0 L272.0,473.1 L273.0,469.5 L274.0,465.1 L275.0,462.2 L276.0,460.6 L277.0,459.2 L278.0,459.3 L279.0,460.4 L280.0,463.8 L281.0,464.8 L282.0,466.6 L283.0,463.6 L284.0,461.7 L285.0,457.0 L286.0,460.5 L287.0,453.9 L288.0,449.5 L289.0,451.6 L290.0,450.4 L291.0,453.5 L292.0,453.9 L293.0,460.2 L294.0,459.5 L295.0,458.2 L296.0,452.7 L297.0,449.6 L298.0,444.3 L299.0,438.8 L300.0,445.3 L301.0,440.9 L302.0,444.7 L303.0,441.1 L304.0,442.9 L305.0,445.0 L306.0,442.6 L307.0,439.4 L308.0,440.5 L309.0,443.6 L310.0,439.6 L311.0,438.8 L312.0,438.5 L313.0,441.3 L314.0,431.8 L315.0,436.5 L316.0,443.2 L317.0,440.9 L318.0,444.0 L319.0,450.1 L320.0,455.2 L321.0,457.7 L322.0,460.0 L323.0,460.6 L324.0,470.2 L325.0,465.0 L326.0,463.5 L327.0,462.7 L328.0,463.2 L329.0,457.6 L330.0,451.5 L331.0,450.6 L332.0,448.5 L333.0,444.4 L334.0,437.7 L335.0,432.8 L336.0,431.9 L337.0,427.6 L338.0,429.3 L339.0,434.8 L340.0,433.4 L341.0,434.1 L342.0,435.6 L343.0,433.3 L344.0,430.8 L345.0,431.0 L346.0,436.6 L347.0,436.1 L348.0,441.5 L349.0,439.3 L350.0,437.8 L351.0,446.7 L352.0,449.6 L353.0,447.9 L354.0,448.8 L355.0,453.7 L356.0,450.9 L357.0,449.1 L358.0,446.2 L359.0,450.3 L360.0,446.7 L361.0,451.4 L362.0,451.2 L363.0,454.7 L364.0,462.9 L365.0,460.7 L366.0,463.3 L367.0,465.5 M378.7,441.7 L379.7,448.2 L380.7,453.6 L381.7,454.6 L382.7,458.5 L383.7,459.2 L384.7,462.9 L385.7,464.7 L386.7,466.2 L387.7,464.3 L388.7,468.6 L389.7,467.1 L390.7,460.7 L391.7,465.9 L392.7,469.1 L393.7,463.0 L394.7,458.9 L395.7,456.2 L396.7,459.4 L397.7,458.4 L398.7,455.2 L399.7,456.5 L400.7,453.6 L401.7,453.2 L402.7,456.1 L403.7,455.3 L404.7,455.0 L405.7,452.9 L406.7,457.8 L407.7,456.8 L408.7,459.7 L409.7,459.4 L410.7,461.8 L411.7,458.7 L412.7,459.0 L413.7,456.4 L414.7,456.7 L415.7,451.8 L416.7,450.6 L417.7,449.2 L418.7,454.6 L419.7,458.5 L420.7,456.6 L421.7,459.2 L422.7,457.0 L423.7,462.0 L424.7,463.2 L425.7,467.0 L426.7,460.2 L427.7,458.1 L428.7,453.5 L429.7,456.1 L430.7,454.3 L431.7,453.6 L432.7,451.4 L433.7,443.9 L434.7,446.2 L435.7,446.3 L436.7,448.8 L437.7,447.8 L438.7,442.9 L439.7,443.6 L440.7,444.6 L441.7,449.2 L442.7,452.4 L443.7,450.8 L444.7,452.3 L445.7,458.5 L446.7,454.0 L447.7,463.1 L448.7,460.1 L449.7,461.0 L450.7,461.0 L451.7,462.5 L452.7,459.7 L453.7,455.2 L454.7,449.8 L455.7,449.7 L456.7,452.9 L457.7,455.9 L458.7,453.2 L459.7,453.3 L460.7,454.5 L461.7,457.5 L462.7,455.7 L463.7,457.2 L464.7,458.8 L465.7,454.8 L466.7,459.6 L467.7,454.0 L468.7,453.3 L469.7,455.4 L470.7,455.9 L471.7,454.0 L472.7,452.8 L473.7,455.3 L474.7,456.9 L475.7,461.4 L476.7,458.3 L477.7,459.9 L478.7,456.6 L479.7,462.0 L480.7,462.3 L481.7,463.7 L482.7,458.4 L483.7,454.5 L484.7,456.2 L485.7,454.7 L486.7,452.4 L487.7,459.7 L488.7,465.6 L489.7,464.7 L490.7,463.8 L491.7,466.0 L492.7,468.9 L493.7,470.1 L494.7,467.2 L495.7,464.9 L496.7,461.2 L497.7,462.9 L498.7,463.5 L499.7,462.3 L500.7,453.9 L501.7,455.1 L502.7,451.5 L503.7,452.2 L504.7,446.7 L505.7,444.1 L506.7,444.7 L507.7,449.1 L508.7,452.2 L509.7,461.3 L510.7,460.3 L511.7,462.9 L512.7,465.2 L513.7,466.4 L514.7,473.3 L515.7,471.5" fill="none" stroke="#ff2020" stroke-width="0.9"/>
<path d="M108.0,463.3 L109.0,459.8 L110.0,453.7 L111.0,451.4 L112.0,456.5 L113.0,461.2 L114.0,463.4 L115.0,460.9 L116.0,458.6 L117.0,459.2 L118.0,462.0 L119.0,460.6 L120.0,457.9 L121.0,459.3 L122.0,460.3 L123.0,456.8 L124.0,463.2 L125.0,463.9 L126.0,465.7 L127.0,462.6 L128.0,462.2 L129.0,455.8 L130.0,455.7 L131.0,457.8 L132.0,457.8 L133.0,464.9 L134.0,468.5 L135.0,470.9 L136.0,471.4 L137.0,471.9 L138.0,470.8 L139.0,470.1 L140.0,456.8 L141.0,458.6 L142.0,456.0 L143.0,459.3 L144.0,461.1 L145.0,459.1 L146.0,461.2 L147.0,457.4 L148.0,460.9 L149.0,457.7 L150.0,464.6 L151.0,465.7 L152.0,464.2 L153.0,459.2 L154.0,458.3 L155.0,457.9 L156.0,463.3 L157.0,467.5 L158.0,465.2 L159.0,465.6 L160.0,469.2 L161.0,466.7 L162.0,464.0 L163.0,469.8 L164.0,465.2 L165.0,464.3 L166.0,464.4 L167.0,463.0 L168.0,463.0 L169.0,460.2 L170.0,458.5 L171.0,451.1 L172.0,450.6 L173.0,453.3 L174.0,451.6 L175.0,451.4 L176.0,454.7 L177.0,457.1 L178.0,456.6 L179.0,459.8 L180.0,466.2 L181.0,468.0 L182.0,460.6 L183.0,463.9 L184.0,458.4 L185.0,460.3 L186.0,455.7 L187.0,458.7 L188.0,462.4 L189.0,461.9 L190.0,461.2 L191.0,456.2 L192.0,458.3 L193.0,456.0 L194.0,465.1 L195.0,460.5 L196.0,456.2 L197.0,465.2 M217.0,461.6 L218.0,459.8 L219.0,459.5 L220.0,455.0 L221.0,452.6 L222.0,452.8 L223.0,457.7 L224.0,460.4 L225.0,464.3 L226.0,469.4 L227.0,468.1 L228.0,462.0 L229.0,462.6 L230.0,461.5 L231.0,461.5 L232.0,461.9 L233.0,459.0 L234.0,460.7 L235.0,465.1 L236.0,466.3 L237.0,473.3 L238.0,466.6 L239.0,467.0 L240.0,463.5 L241.0,461.9 L242.0,468.2 L243.0,460.1 L244.0,458.0 L245.0,459.8 L246.0,457.4 L247.0,458.8 L248.0,454.4 L249.0,460.9 L250.0,458.6 L251.0,457.7 L252.0,461.2 L253.0,463.6 L254.0,460.3 L255.0,462.7 L256.0,461.7 L257.0,465.0 L258.0,463.2 L259.0,461.8 L260.0,458.6 L261.0,465.5 L262.0,466.2 L263.0,464.8 L264.0,463.1 L265.0,465.0 L266.0,466.7 L267.0,463.5 L268.0,472.2 L269.0,474.4 L270.0,474.7 L271.0,477.7 L272.0,473.2 L273.0,471.0 L274.0,466.1 L275.0,466.5 L276.0,463.4 L277.0,460.9 L278.0,461.1 L279.0,461.6 L280.0,464.2 L281.0,466.8 L282.0,467.7 L283.0,462.9 L284.0,464.3 L285.0,461.1 L286.0,458.1 L287.0,455.3 L288.0,453.3 L289.0,453.0 L290.0,451.9 L291.0,454.9 L292.0,453.4 L293.0,462.2 L294.0,459.0 L295.0,458.0 L296.0,454.5 L297.0,449.5 L298.0,446.3 L299.0,440.7 L300.0,445.3 L301.0,443.2 L302.0,443.4 L303.0,443.2 L304.0,445.9 L305.0,446.7 L306.0,444.8 L307.0,439.7 L308.0,442.1 L309.0,443.6 L310.0,444.8 L311.0,441.5 L312.0,442.5 L313.0,442.7 L314.0,435.0 L315.0,437.4 L316.0,446.4 L317.0,442.8 L318.0,444.8 L319.0,450.3 L320.0,456.0 L321.0,460.1 L322.0,461.8 L323.0,461.3 L324.0,470.0 L325.0,464.7 L326.0,463.7 L327.0,464.6 L328.0,462.4 L329.0,460.0 L330.0,453.1 L331.0,453.4 L332.0,449.4 L333.0,444.9 L334.0,439.9 L335.0,435.6 L336.0,431.6 L337.0,431.1 L338.0,432.7 L339.0,434.6 L340.0,436.0 L341.0,434.9 L342.0,439.5 L343.0,438.5 L344.0,432.5 L345.0,430.8 L346.0,438.3 L347.0,438.6 L348.0,443.6 L349.0,440.7 L350.0,441.0 L351.0,447.3 L352.0,453.2 L353.0,449.0 L354.0,450.2 L355.0,456.2 L356.0,452.2 L357.0,451.5 L358.0,449.8 L359.0,448.3 L360.0,447.0 L361.0,452.1 L362.0,451.6 L363.0,455.1 L364.0,462.9 L365.0,460.3 L366.0,462.8 L367.0,465.9 M378.7,446.0 L379.7,450.8 L380.7,453.3 L381.7,454.9 L382.7,460.9 L383.7,463.2 L384.7,464.3 L385.7,467.3 L386.7,466.6 L387.7,464.7 L388.7,471.8 L389.7,466.9 L390.7,462.8 L391.7,466.5 L392.7,469.6 L393.7,465.6 L394.7,460.0 L395.7,458.2 L396.7,461.0 L397.7,456.3 L398.7,458.2 L399.7,458.0 L400.7,455.8 L401.7,454.2 L402.7,457.9 L403.7,458.8 L404.7,454.4 L405.7,454.1 L406.7,457.3 L407.7,456.4 L408.7,460.7 L409.7,462.2 L410.7,460.2 L411.7,458.5 L412.7,461.5 L413.7,459.0 L414.7,457.9 L415.7,453.8 L416.7,450.8 L417.7,451.7 L418.7,456.8 L419.7,459.1 L420.7,457.6 L421.7,462.6 L422.7,458.5 L423.7,463.5 L424.7,463.5 L425.7,468.0 L426.7,463.1 L427.7,458.8 L428.7,455.0 L429.7,457.2 L430.7,454.7 L431.7,452.3 L432.7,451.9 L433.7,446.6 L434.7,450.3 L435.7,447.0 L436.7,449.2 L437.7,449.1 L438.7,441.5 L439.7,444.2 L440.7,444.7 L441.7,450.6 L442.7,453.9 L443.7,453.2 L444.7,453.6 L445.7,459.3 L446.7,454.0 L447.7,465.2 L448.7,462.2 L449.7,462.1 L450.7,461.7 L451.7,464.8 L452.7,461.6 L453.7,458.6 L454.7,450.4 L455.7,452.0 L456.7,453.1 L457.7,456.4 L458.7,453.2 L459.7,457.3 L460.7,456.0 L461.7,459.3 L462.7,456.0 L463.7,459.2 L464.7,458.6 L465.7,458.4 L466.7,460.6 L467.7,457.7 L468.7,454.1 L469.7,456.3 L470.7,455.2 L471.7,456.1 L472.7,456.4 L473.7,457.2 L474.7,459.8 L475.7,461.8 L476.7,463.0 L477.7,460.1 L478.7,458.6 L479.7,463.4 L480.7,465.7 L481.7,464.7 L482.7,460.4 L483.7,453.7 L484.7,458.3 L485.7,455.2 L486.7,452.7 L487.7,460.6 L488.7,465.3 L489.7,465.2 L490.7,468.1 L491.7,466.5 L492.7,471.9 L493.7,473.4 L494.7,470.2 L495.7,467.8 L496.7,464.1 L497.7,465.1 L498.7,465.5 L499.7,463.1 L500.7,453.5 L501.7,455.3 L502.7,453.1 L503.7,455.5 L504.7,449.5 L505.7,444.2 L506.7,447.3 L507.7,452.7 L508.7,453.4 L509.7,463.9 L510.7,461.5 L511.7,464.2 L512.7,467.4 L513.7,466.4 L514.7,475.7 L515.7,472.9" fill="none" stroke="#108010" stroke-width="0.9"/>
<path d="M108.0,504.2 L109.0,504.9 L110.0,504.6 L111.0,504.8 L112.0,501.7 L113.0,499.4 L114.0,504.8 L115.0,503.1 L116.0,503.7 L117.0,504.7 L118.0,502.8 L119.0,506.8 L120.0,508.6 L121.0,508.4 L122.0,512.6 L123.0,510.3 L124.0,508.5 L125.0,509.9 L126.0,507.9 L127.0,508.5 L128.0,505.2 L129.0,503.4 L130.0,501.1 L131.0,504.6 L132.0,509.0 L133.0,507.5 L134.0,507.8 L135.0,505.8 L136.0,512.8 L137.0,511.4 L138.0,510.4 L139.0,509.5 L140.0,512.1 L141.0,510.3 L142.0,508.8 L143.0,512.3 L144.0,511.2 L145.0,512.0 L146.0,514.4 L147.0,513.0 L148.0,511.8 L149.0,512.7 L150.0,511.9 L151.0,512.3 L152.0,515.6 L153.0,515.1 L154.0,512.8 L155.0,510.9 L156.0,509.5 L157.0,510.7 L158.0,511.5 L159.0,510.6 L160.0,514.4 L161.0,509.5 L162.0,510.4 L163.0,510.5 L164.0,509.6 L165.0,504.0 L166.0,505.5 L167.0,505.5 L168.0,502.7 L169.0,503.2 L170.0,505.5 L171.0,505.5 L172.0,504.3 L173.0,505.8 L174.0,507.7 L175.0,502.8 L176.0,507.0 L177.0,506.2 L178.0,502.9 L179.0,504.1 L180.0,502.5 L181.0,510.0 L182.0,507.1 L183.0,505.0 L184.0,502.3 L185.0,503.9 L186.0,505.7 L187.0,505.3 L188.0,505.0 L189.0,500.5 L190.0,498.4 L191.0,504.3 L192.0,503.7 L193.0,505.7 L194.0,510.2 L195.0,505.2 L196.0,506.5 L197.0,509.3 M217.0,500.3 L218.0,504.5 L219.0,506.1 L220.0,506.2 L221.0,506.1 L222.0,511.7 L223.0,507.5 L224.0,504.8 L225.0,502.3 L226.0,502.7 L227.0,507.9 L228.0,506.4 L229.0,502.8 L230.0,507.1 L231.0,512.7 L232.0,507.7 L233.0,506.8 L234.0,505.8 L235.0,502.4 L236.0,505.5 L237.0,505.0 L238.0,503.3 L239.0,505.8 L240.0,508.0 L241.0,506.9 L242.0,511.8 L243.0,510.0 L244.0,508.3 L245.0,510.3 L246.0,514.6 L247.0,515.8 L248.0,514.2 L249.0,511.8 L250.0,506.6 L251.0,510.3 L252.0,507.7 L253.0,513.7 L254.0,510.7 L255.0,503.6 L256.0,506.8 L257.0,509.5 L258.0,509.5 L259.0,509.2 L260.0,510.2 L261.0,511.5 L262.0,509.0 L263.0,510.0 L264.0,514.2 L265.0,511.1 L266.0,515.6 L267.0,513.1 L268.0,507.5 L269.0,511.1 L270.0,509.8 L271.0,509.7 L272.0,509.4 L273.0,512.8 L274.0,509.5 L275.0,507.2 L276.0,506.5 L277.0,507.5 L278.0,508.4 L279.0,506.4 L280.0,509.9 L281.0,507.4 L282.0,506.7 L283.0,509.1 L284.0,508.5 L285.0,508.3 L286.0,510.2 L287.0,508.2 L288.0,507.5 L289.0,508.7 L290.0,505.8 L291.0,502.6 L292.0,505.6 L293.0,506.9 L294.0,505.4 L295.0,508.9 L296.0,509.3 L297.0,507.1 L298.0,506.6 L299.0,505.9 L300.0,509.0 L301.0,511.4 L302.0,509.8 L303.0,507.2 L304.0,507.7 L305.0,507.3 L306.0,507.1 L307.0,507.5 L308.0,509.1 L309.0,511.1 L310.0,509.2 L311.0,515.7 L312.0,515.6 L313.0,511.3 L314.0,503.3 L315.0,503.2 L316.0,511.7 L317.0,512.7 L318.0,511.4 L319.0,511.9 L320.0,507.1 L321.0,509.8 L322.0,507.7 L323.0,510.3 L324.0,511.1 L325.0,510.0 L326.0,509.5 L327.0,510.3 L328.0,514.2 L329.0,508.6 L330.0,510.0 L331.0,509.6 L332.0,510.8 L333.0,513.9 L334.0,507.1 L335.0,508.5 L336.0,509.3 L337.0,516.0 L338.0,513.2 L339.0,512.9 L340.0,516.8 L341.0,518.0 L342.0,517.9 L343.0,515.6 L344.0,517.9 L345.0,515.7 L346.0,514.2 L347.0,511.5 L348.0,514.9 L349.0,511.6 L350.0,514.1 L351.0,512.0 L352.0,510.9 L353.0,510.4 L354.0,512.7 L355.0,516.3 L356.0,511.4 L357.0,510.2 L358.0,507.7 L359.0,513.6 L360.0,506.3 L361.0,508.1 L362.0,505.8 L363.0,505.8 L364.0,508.2 L365.0,509.1 L366.0,502.3 L367.0,501.6 M378.7,504.5 L379.7,503.5 L380.7,506.9 L381.7,505.3 L382.7,505.4 L383.7,501.6 L384.7,505.7 L385.7,508.6 L386.7,509.1 L387.7,508.8 L388.7,513.4 L389.7,510.1 L390.7,514.7 L391.7,515.2 L392.7,512.0 L393.7,509.8 L394.7,507.9 L395.7,504.8 L396.7,508.2 L397.7,508.7 L398.7,511.7 L399.7,512.8 L400.7,505.9 L401.7,506.9 L402.7,507.9 L403.7,508.3 L404.7,509.3 L405.7,506.3 L406.7,505.3 L407.7,508.5 L408.7,503.8 L409.7,502.4 L410.7,502.8 L411.7,502.0 L412.7,508.4 L413.7,506.0 L414.7,509.9 L415.7,511.1 L416.7,513.1 L417.7,510.1 L418.7,509.7 L419.7,510.2 L420.7,508.9 L421.7,505.4 L422.7,509.8 L423.7,511.8 L424.7,508.6 L425.7,508.3 L426.7,507.0 L427.7,508.5 L428.7,511.7 L429.7,511.7 L430.7,511.5 L431.7,505.7 L432.7,505.4 L433.7,507.8 L434.7,505.8 L435.7,509.0 L436.7,507.9 L437.7,508.2 L438.7,509.5 L439.7,511.6 L440.7,514.9 L441.7,511.6 L442.7,508.5 L443.7,510.4 L444.7,512.6 L445.7,509.2 L446.7,508.9 L447.7,509.2 L448.7,519.1 L449.7,517.2 L450.7,509.8 L451.7,505.8 L452.7,505.3 L453.7,505.7 L454.7,505.3 L455.7,505.0 L456.7,510.3 L457.7,512.6 L458.7,508.2 L459.7,507.8 L460.7,508.5 L461.7,507.6 L462.7,504.7 L463.7,509.9 L464.7,511.7 L465.7,509.7 L466.7,512.4 L467.7,511.1 L468.7,510.2 L469.7,508.2 L470.7,508.5 L471.7,505.9 L472.7,509.1 L473.7,510.5 L474.7,510.0 L475.7,508.3 L476.7,507.2 L477.7,509.3 L478.7,508.2 L479.7,508.2 L480.7,506.8 L481.7,504.3 L482.7,504.5 L483.7,509.5 L484.7,506.3 L485.7,505.9 L486.7,506.3 L487.7,505.0 L488.7,505.9 L489.7,505.6 L490.7,505.1 L491.7,508.9 L492.7,504.9 L493.7,504.4 L494.7,502.4 L495.7,504.0 L496.7,504.9 L497.7,506.7 L498.7,505.3 L499.7,507.9 L500.7,503.9 L501.7,507.4 L502.7,503.9 L503.7,501.9 L504.7,498.5 L505.7,501.1 L506.7,507.6 L507.7,506.1 L508.7,506.6 L509.7,506.4 L510.7,510.2 L511.7,510.5 L512.7,508.7 L513.7,508.3 L514.7,510.0 L515.7,506.1" fill="none" stroke="#2020ff" stroke-width="0.9"/>
<path d="M108.0,502.3 L109.0,502.4 L110.0,503.3 L111.0,502.5 L112.0,501.0 L113.0,498.2 L114.0,502.7 L115.0,500.4 L116.0,502.0 L117.0,501.6 L118.0,499.3 L119.0,504.8 L120.0,506.5 L121.0,507.8 L122.0,511.6 L123.0,510.9 L124.0,508.7 L125.0,508.0 L126.0,507.7 L127.0,506.4 L128.0,503.0 L129.0,503.1 L130.0,499.0 L131.0,502.2 L132.0,507.6 L133.0,505.2 L134.0,504.3 L135.0,503.9 L136.0,510.8 L137.0,511.4 L138.0,508.7 L139.0,509.8 L140.0,513.2 L141.0,506.8 L142.0,508.2 L143.0,509.6 L144.0,510.1 L145.0,509.8 L146.0,513.5 L147.0,509.5 L148.0,508.2 L149.0,511.0 L150.0,509.8 L151.0,510.4 L152.0,515.1 L153.0,514.0 L154.0,511.8 L155.0,507.9 L156.0,510.6 L157.0,510.3 L158.0,510.4 L159.0,511.8 L160.0,510.1 L161.0,510.0 L162.0,509.5 L163.0,509.1 L164.0,505.8 L165.0,504.3 L166.0,502.3 L167.0,503.8 L168.0,500.2 L169.0,503.2 L170.0,502.6 L171.0,505.7 L172.0,502.9 L173.0,503.5 L174.0,504.8 L175.0,503.4 L176.0,504.0 L177.0,502.4 L178.0,501.6 L179.0,502.9 L180.0,501.6 L181.0,507.6 L182.0,506.5 L183.0,503.8 L184.0,502.5 L185.0,501.0 L186.0,503.8 L187.0,502.0 L188.0,502.1 L189.0,500.5 L190.0,501.4 L191.0,502.3 L192.0,500.2 L193.0,504.7 L194.0,507.4 L195.0,502.4 L196.0,504.3 L197.0,507.2 M217.0,498.5 L218.0,503.2 L219.0,500.9 L220.0,505.4 L221.0,505.1 L222.0,507.9 L223.0,505.5 L224.0,503.7 L225.0,501.7 L226.0,499.8 L227.0,506.8 L228.0,505.9 L229.0,503.1 L230.0,505.6 L231.0,510.0 L232.0,506.6 L233.0,506.8 L234.0,503.6 L235.0,500.3 L236.0,502.5 L237.0,503.1 L238.0,501.9 L239.0,504.1 L240.0,509.4 L241.0,507.0 L242.0,510.2 L243.0,507.1 L244.0,505.5 L245.0,509.8 L246.0,512.9 L247.0,514.7 L248.0,514.0 L249.0,511.3 L250.0,505.8 L251.0,509.0 L252.0,509.2 L253.0,512.1 L254.0,507.9 L255.0,503.5 L256.0,507.2 L257.0,507.7 L258.0,507.4 L259.0,508.3 L260.0,510.6 L261.0,510.3 L262.0,506.9 L263.0,510.1 L264.0,511.0 L265.0,510.5 L266.0,512.9 L267.0,512.3 L268.0,505.1 L269.0,511.0 L270.0,507.2 L271.0,507.7 L272.0,507.0 L273.0,511.2 L274.0,510.1 L275.0,506.7 L276.0,502.6 L277.0,505.1 L278.0,508.2 L279.0,505.3 L280.0,506.1 L281.0,505.5 L282.0,504.7 L283.0,506.2 L284.0,506.0 L285.0,506.9 L286.0,509.3 L287.0,506.0 L288.0,506.2 L289.0,509.1 L290.0,503.2 L291.0,501.2 L292.0,503.6 L293.0,504.9 L294.0,504.9 L295.0,508.1 L296.0,506.6 L297.0,505.3 L298.0,506.2 L299.0,503.1 L300.0,507.1 L301.0,509.0 L302.0,505.4 L303.0,505.2 L304.0,506.7 L305.0,506.1 L306.0,504.4 L307.0,506.9 L308.0,506.6 L309.0,509.4 L310.0,506.2 L311.0,512.6 L312.0,512.9 L313.0,508.0 L314.0,502.9 L315.0,503.0 L316.0,508.3 L317.0,511.5 L318.0,508.9 L319.0,509.0 L320.0,507.2 L321.0,508.8 L322.0,506.8 L323.0,507.8 L324.0,507.9 L325.0,509.0 L326.0,506.5 L327.0,509.7 L328.0,513.5 L329.0,506.8 L330.0,507.3 L331.0,508.4 L332.0,509.9 L333.0,510.5 L334.0,505.9 L335.0,504.9 L336.0,507.9 L337.0,512.9 L338.0,510.5 L339.0,510.8 L340.0,515.4 L341.0,517.2 L342.0,517.0 L343.0,516.5 L344.0,515.9 L345.0,515.3 L346.0,512.3 L347.0,508.1 L348.0,512.0 L349.0,511.4 L350.0,511.8 L351.0,511.0 L352.0,508.2 L353.0,509.7 L354.0,512.9 L355.0,512.4 L356.0,509.0 L357.0,507.9 L358.0,508.3 L359.0,511.9 L360.0,505.1 L361.0,506.8 L362.0,505.3 L363.0,501.4 L364.0,505.7 L365.0,507.4 L366.0,499.3 L367.0,500.2 M378.7,503.3 L379.7,500.2 L380.7,505.3 L381.7,502.7 L382.7,503.4 L383.7,499.6 L384.7,505.5 L385.7,504.1 L386.7,508.8 L387.7,507.4 L388.7,511.0 L389.7,508.1 L390.7,511.1 L391.7,513.4 L392.7,511.0 L393.7,506.8 L394.7,506.9 L395.7,502.1 L396.7,507.4 L397.7,506.3 L398.7,507.9 L399.7,510.7 L400.7,505.2 L401.7,504.7 L402.7,505.0 L403.7,507.1 L404.7,506.2 L405.7,504.7 L406.7,504.6 L407.7,506.5 L408.7,502.7 L409.7,502.1 L410.7,500.2 L411.7,500.9 L412.7,506.1 L413.7,505.1 L414.7,507.1 L415.7,508.3 L416.7,512.3 L417.7,510.3 L418.7,509.4 L419.7,507.2 L420.7,507.3 L421.7,505.5 L422.7,507.2 L423.7,510.8 L424.7,506.6 L425.7,505.8 L426.7,504.6 L427.7,507.3 L428.7,508.7 L429.7,507.8 L430.7,508.0 L431.7,502.9 L432.7,504.2 L433.7,505.8 L434.7,502.9 L435.7,508.3 L436.7,508.2 L437.7,504.8 L438.7,505.6 L439.7,508.0 L440.7,511.9 L441.7,509.1 L442.7,508.9 L443.7,507.2 L444.7,511.3 L445.7,508.1 L446.7,506.6 L447.7,505.5 L448.7,517.7 L449.7,513.6 L450.7,507.9 L451.7,506.7 L452.7,505.0 L453.7,502.1 L454.7,504.3 L455.7,503.5 L456.7,508.0 L457.7,510.6 L458.7,507.6 L459.7,506.5 L460.7,508.2 L461.7,505.3 L462.7,503.9 L463.7,505.9 L464.7,511.3 L465.7,509.0 L466.7,510.9 L467.7,511.5 L468.7,508.8 L469.7,508.4 L470.7,505.3 L471.7,503.5 L472.7,507.7 L473.7,509.9 L474.7,507.9 L475.7,507.4 L476.7,506.7 L477.7,507.8 L478.7,504.9 L479.7,505.9 L480.7,505.7 L481.7,501.8 L482.7,505.3 L483.7,509.0 L484.7,507.3 L485.7,504.1 L486.7,504.4 L487.7,505.2 L488.7,503.7 L489.7,502.8 L490.7,503.5 L491.7,506.1 L492.7,502.4 L493.7,501.5 L494.7,501.6 L495.7,506.2 L496.7,503.7 L497.7,504.2 L498.7,504.7 L499.7,505.3 L500.7,499.5 L501.7,504.6 L502.7,499.7 L503.7,501.9 L504.7,497.8 L505.7,498.5 L506.7,503.9 L507.7,505.6 L508.7,502.7 L509.7,504.7 L510.7,508.8 L511.7,509.2 L512.7,505.9 L513.7,507.9 L514.7,508.3 L515.7,504.4" fill="none" stroke="#ff20ff" stroke-width="0.9"/>
<path d="M107.6,537 V458 M197.4,465 V493 M367.5,462 V537" stroke="#108010" stroke-width="0.9"/>
<path d="M197.4,509 V527 M367.5,508 V537" stroke="#ff20ff" stroke-width="1"/>
<path d="M217,457 V500 M378.7,450 V490" stroke="#ff2020" stroke-width="0.9"/>
<path d="M210.3,462 V537 M213,475 V530" stroke="#107010" stroke-width="1.4" opacity="0.7"/>
<path d="M212,500 V535 M216,505 V532" stroke="#ff20ff" stroke-width="0.8" opacity="0.7"/>
<path d="M107,397 H517.5 V537.2 H107 Z" fill="none" stroke="#202020" stroke-width="1.2"/>
<text x="103.5" y="404.3" font-size="7" fill="#ff2020" font-weight="bold" text-anchor="end">150.0</text>
<rect x="103.5" y="401.3" width="3" height="1" fill="#ff2020"/>
<text x="110" y="404.3" font-size="7" fill="#20a020" font-weight="bold">150.0</text>
<text x="103.5" y="435.0" font-size="7" fill="#ff2020" font-weight="bold" text-anchor="end">120.0</text>
<rect x="103.5" y="432.0" width="3" height="1" fill="#ff2020"/>
<text x="110" y="435.0" font-size="7" fill="#20a020" font-weight="bold">120.0</text>
<text x="103.5" y="469.9" font-size="7" fill="#ff2020" font-weight="bold" text-anchor="end">90.0</text>
<rect x="103.5" y="466.9" width="3" height="1" fill="#ff2020"/>
<text x="110" y="469.9" font-size="7" fill="#20a020" font-weight="bold">90.0</text>
<text x="103.5" y="504.5" font-size="7" fill="#ff2020" font-weight="bold" text-anchor="end">60.0</text>
<rect x="103.5" y="501.5" width="3" height="1" fill="#ff2020"/>
<text x="110" y="504.5" font-size="7" fill="#20a020" font-weight="bold">60.0</text>
<text x="103.5" y="535.7" font-size="7" fill="#ff2020" font-weight="bold" text-anchor="end">30.0</text>
<rect x="103.5" y="532.7" width="3" height="1" fill="#ff2020"/>
<text x="110" y="535.7" font-size="7" fill="#20a020" font-weight="bold">30.0</text>
<text x="103" y="418.5" font-size="7" fill="#ff2020" font-weight="bold" text-anchor="end">cm/s</text>
<text x="112.5" y="418.5" font-size="7" fill="#20a020" font-weight="bold">cm/s</text>
<text x="514.5" y="404.3" font-size="7" fill="#2020ff" font-weight="bold" text-anchor="end">200.0</text>
<rect x="517.5" y="401.3" width="3" height="1" fill="#ff20ff"/>
<text x="521" y="404.3" font-size="7" fill="#ff20ff" font-weight="bold">200.0</text>
<text x="514.5" y="435.0" font-size="7" fill="#2020ff" font-weight="bold" text-anchor="end">150.0</text>
<rect x="517.5" y="432.0" width="3" height="1" fill="#ff20ff"/>
<text x="521" y="435.0" font-size="7" fill="#ff20ff" font-weight="bold">150.0</text>
<text x="514.5" y="469.9" font-size="7" fill="#2020ff" font-weight="bold" text-anchor="end">100.0</text>
<rect x="517.5" y="466.9" width="3" height="1" fill="#ff20ff"/>
<text x="521" y="469.9" font-size="7" fill="#ff20ff" font-weight="bold">100.0</text>
<text x="514.5" y="504.5" font-size="7" fill="#2020ff" font-weight="bold" text-anchor="end">50.0</text>
<rect x="517.5" y="501.5" width="3" height="1" fill="#ff20ff"/>
<text x="521" y="504.5" font-size="7" fill="#ff20ff" font-weight="bold">50.0</text>
<text x="514.5" y="535.7" font-size="7" fill="#2020ff" font-weight="bold" text-anchor="end">0.0</text>
<rect x="517.5" y="532.7" width="3" height="1" fill="#ff20ff"/>
<text x="521" y="535.7" font-size="7" fill="#ff20ff" font-weight="bold">0.0</text>
<text x="513.5" y="418.5" font-size="7" fill="#2020ff" font-weight="bold" text-anchor="end">cm/s</text>
<text x="521" y="418.5" font-size="7" fill="#ff20ff" font-weight="bold">cm/s</text>
<text x="107" y="547" font-size="7" fill="#202020" font-weight="bold">00:00:00</text>
<text x="175.6" y="547" font-size="7" fill="#202020" font-weight="bold" text-anchor="middle">00:03:36</text>
<text x="244.2" y="547" font-size="7" fill="#202020" font-weight="bold" text-anchor="middle">00:07:12</text>
<text x="312.8" y="547" font-size="7" fill="#202020" font-weight="bold" text-anchor="middle">00:10:48</text>
<text x="381.4" y="547" font-size="7" fill="#202020" font-weight="bold" text-anchor="middle">00:14:24</text>
<text x="450" y="547" font-size="7" fill="#202020" font-weight="bold" text-anchor="middle">00:18:00</text>
<text x="520" y="547" font-size="7" fill="#202020" font-weight="bold" text-anchor="end">00:21:37</text>
<rect x="574.5" y="369" width="354" height="180" fill="#ffffff"/>
<rect x="573" y="369" width="1.5" height="180" fill="#bcc8cc"/>
<rect x="587" y="369" width="0.8" height="180" fill="#e4e4e4"/>
<rect x="700.8" y="369" width="0.8" height="180" fill="#e4e4e4"/>
<rect x="814.7" y="369" width="0.8" height="180" fill="#e4e4e4"/>
<text x="638" y="379" font-size="8.5" fill="#101010" font-weight="bold" textLength="13.3" lengthAdjust="spacingAndGlyphs">Tijd</text>
<text x="748.5" y="379" font-size="8.5" fill="#101010" font-weight="bold" textLength="19.9" lengthAdjust="spacingAndGlyphs">Naam</text>
<text x="864" y="379" font-size="8.5" fill="#101010" font-weight="bold" textLength="16.7" lengthAdjust="spacingAndGlyphs">Type</text>
<text x="577" y="405.6" font-size="8.6" fill="#202020" textLength="9.2" lengthAdjust="spacingAndGlyphs">57</text>
<text x="588.8" y="405.6" font-size="8.6" fill="#202020" textLength="29.5" lengthAdjust="spacingAndGlyphs">00:05:30</text>
<text x="702.8" y="405.6" font-size="8.6" fill="#202020" textLength="62.6" lengthAdjust="spacingAndGlyphs">Vd: 42 cm/s &gt; Max</text>
<text x="816.8" y="405.6" font-size="8.6" fill="#202020" textLength="43.6" lengthAdjust="spacingAndGlyphs">Marker / Auto</text>
<rect x="587" y="411.75" width="341.5" height="1" fill="#e6e6e6"/>
<text x="577" y="425.85" font-size="8.6" fill="#202020" textLength="9.2" lengthAdjust="spacingAndGlyphs">58</text>
<text x="588.8" y="425.85" font-size="8.6" fill="#202020" textLength="29.5" lengthAdjust="spacingAndGlyphs">00:05:36</text>
<text x="702.8" y="425.85" font-size="8.6" fill="#202020" textLength="62.6" lengthAdjust="spacingAndGlyphs">Vd: 44 cm/s &gt; Max</text>
<text x="816.8" y="425.85" font-size="8.6" fill="#202020" textLength="43.6" lengthAdjust="spacingAndGlyphs">Marker / Auto</text>
<rect x="587" y="432.0" width="341.5" height="1" fill="#e6e6e6"/>
<text x="577" y="446.1" font-size="8.6" fill="#202020" textLength="9.2" lengthAdjust="spacingAndGlyphs">59</text>
<text x="588.8" y="446.1" font-size="8.6" fill="#202020" textLength="29.5" lengthAdjust="spacingAndGlyphs">00:05:42</text>
<text x="702.8" y="446.1" font-size="8.6" fill="#202020" textLength="62.6" lengthAdjust="spacingAndGlyphs">Vd: 47 cm/s &gt; Max</text>
<text x="816.8" y="446.1" font-size="8.6" fill="#202020" textLength="43.6" lengthAdjust="spacingAndGlyphs">Marker / Auto</text>
<rect x="587" y="452.25" width="341.5" height="1" fill="#e6e6e6"/>
<text x="577" y="466.35" font-size="8.6" fill="#202020" textLength="9.2" lengthAdjust="spacingAndGlyphs">60</text>
<text x="588.8" y="466.35" font-size="8.6" fill="#202020" textLength="29.5" lengthAdjust="spacingAndGlyphs">00:08:53</text>
<text x="702.8" y="466.35" font-size="8.6" fill="#202020" textLength="59.2" lengthAdjust="spacingAndGlyphs">Lopen met toestel</text>
<text x="816.8" y="466.35" font-size="8.6" fill="#202020" textLength="53.3" lengthAdjust="spacingAndGlyphs">Marker / Manual</text>
<rect x="587" y="473.0" width="341.5" height="20.25" fill="#d4d4d4"/>
<rect x="587" y="472.5" width="341.5" height="1" fill="#e6e6e6"/>
<text x="577" y="486.6" font-size="8.6" fill="#202020" textLength="9.2" lengthAdjust="spacingAndGlyphs">61</text>
<text x="588.8" y="486.6" font-size="8.6" fill="#202020" textLength="29.5" lengthAdjust="spacingAndGlyphs">00:12:08</text>
<text x="702.8" y="486.6" font-size="8.6" fill="#202020" textLength="33.3" lengthAdjust="spacingAndGlyphs">Traplopen</text>
<text x="816.8" y="486.6" font-size="8.6" fill="#202020" textLength="53.3" lengthAdjust="spacingAndGlyphs">Marker / Manual</text>
<rect x="587" y="492.75" width="341.5" height="1" fill="#e6e6e6"/>
<text x="577" y="506.85" font-size="8.6" fill="#202020" textLength="9.2" lengthAdjust="spacingAndGlyphs">62</text>
<text x="588.8" y="506.85" font-size="8.6" fill="#202020" textLength="29.5" lengthAdjust="spacingAndGlyphs">00:14:16</text>
<text x="702.8" y="506.85" font-size="8.6" fill="#202020" textLength="47.9" lengthAdjust="spacingAndGlyphs">Trend settings</text>
<text x="816.8" y="506.85" font-size="8.6" fill="#202020" textLength="53.3" lengthAdjust="spacingAndGlyphs">Marker / Manual</text>
<rect x="587" y="513.0" width="341.5" height="1" fill="#e6e6e6"/>
<text x="577" y="527.1" font-size="8.6" fill="#202020" textLength="9.2" lengthAdjust="spacingAndGlyphs">63</text>
<text x="588.8" y="527.1" font-size="8.6" fill="#202020" textLength="29.5" lengthAdjust="spacingAndGlyphs">00:20:19</text>
<text x="702.8" y="527.1" font-size="8.6" fill="#202020" textLength="24.9" lengthAdjust="spacingAndGlyphs">PAUSE</text>
<text x="816.8" y="527.1" font-size="8.6" fill="#202020" textLength="53.3" lengthAdjust="spacingAndGlyphs">Marker / Manual</text>
<rect x="587" y="533.25" width="341.5" height="1" fill="#e6e6e6"/>
<text x="577" y="547.35" font-size="8.6" fill="#202020" textLength="9.2" lengthAdjust="spacingAndGlyphs">64</text>
<text x="588.8" y="547.35" font-size="8.6" fill="#202020" textLength="29.5" lengthAdjust="spacingAndGlyphs">00:20:56</text>
<text x="702.8" y="547.35" font-size="8.6" fill="#202020" textLength="24.9" lengthAdjust="spacingAndGlyphs">PAUSE</text>
<text x="816.8" y="547.35" font-size="8.6" fill="#202020" textLength="53.3" lengthAdjust="spacingAndGlyphs">Marker / Manual</text>
<rect x="928" y="369" width="14" height="180" fill="#ffffff"/>
<rect x="928" y="369" width="1.5" height="180" fill="#a8a8b0"/>
<rect x="940" y="369" width="2" height="180" fill="#a8a8b0"/>
<rect x="929.5" y="369" width="10.5" height="14.5" fill="#2ab8bc"/>
<path d="M930.5,381 l4.7,-5 l4.7,5 z" fill="#fff"/>
<rect x="929.5" y="515.4" width="10.5" height="16.6" fill="#2ab8bc"/>
<rect x="929.5" y="535" width="10.5" height="13.4" fill="#2ab8bc"/>
<path d="M930.5,537 l4.7,5 l4.7,-5 z" fill="#fff"/>
<rect x="942" y="369" width="35.2" height="180" fill="#ffffff"/>
<rect x="977.2" y="368" width="2.8" height="184" fill="#3f8187"/>
<rect x="943.2" y="370.5" width="33" height="20.4" fill="#2ab8bc"/>
<path d="M953,385.5 l6.6,-6.5 l6.6,6.5 z" fill="#fff"/>
<rect x="943.2" y="392.9" width="33" height="19.9" fill="#2ab8bc"/>
<path d="M953,399.5 l6.6,6.5 l6.6,-6.5 z" fill="#fff"/>
<rect x="943.7" y="424.5" width="31.5" height="20" fill="#fff" stroke="#b0b0b0" stroke-width="0.8"/>
<text x="944.5" y="437.8" font-size="8.5" fill="#2ab8bc" font-weight="bold" textLength="30" lengthAdjust="spacingAndGlyphs">Bewerk</text>
<path d="M949.5,452 l13,13 M962.5,452 l-13,13" stroke="#e01818" stroke-width="3.6"/>
<path d="M950,487 h8 v3 h-8 z" fill="none" stroke="#2ab8bc" stroke-width="1"/>
<path d="M946.5,490 h14 v7 h-14 z" fill="#2ab8bc"/>
<circle cx="960" cy="497" r="3.3" fill="#fff" stroke="#2ab8bc" stroke-width="1.2"/>
<path d="M962.3,499.5 l3,3" stroke="#2ab8bc" stroke-width="1.5"/>
<rect x="950.8" y="512.2" width="18" height="19" fill="none" stroke="#2ab8bc" stroke-width="1.5"/>
<rect x="950.5" y="512" width="18.6" height="2.5" fill="#2ab8bc"/>
<rect x="950.5" y="529" width="18.6" height="2.5" fill="#2ab8bc"/>
<path d="M956.5,516.5 l7.5,5 l-7.5,5 z" fill="#2ab8bc"/>
<rect x="951" y="538.3" width="1.3" height="8.3" fill="#2ab8bc"/>
<rect x="955.5" y="538.3" width="1.3" height="8.3" fill="#2ab8bc"/>
<rect x="960" y="538.3" width="1.3" height="8.3" fill="#2ab8bc"/></svg></body></html>
